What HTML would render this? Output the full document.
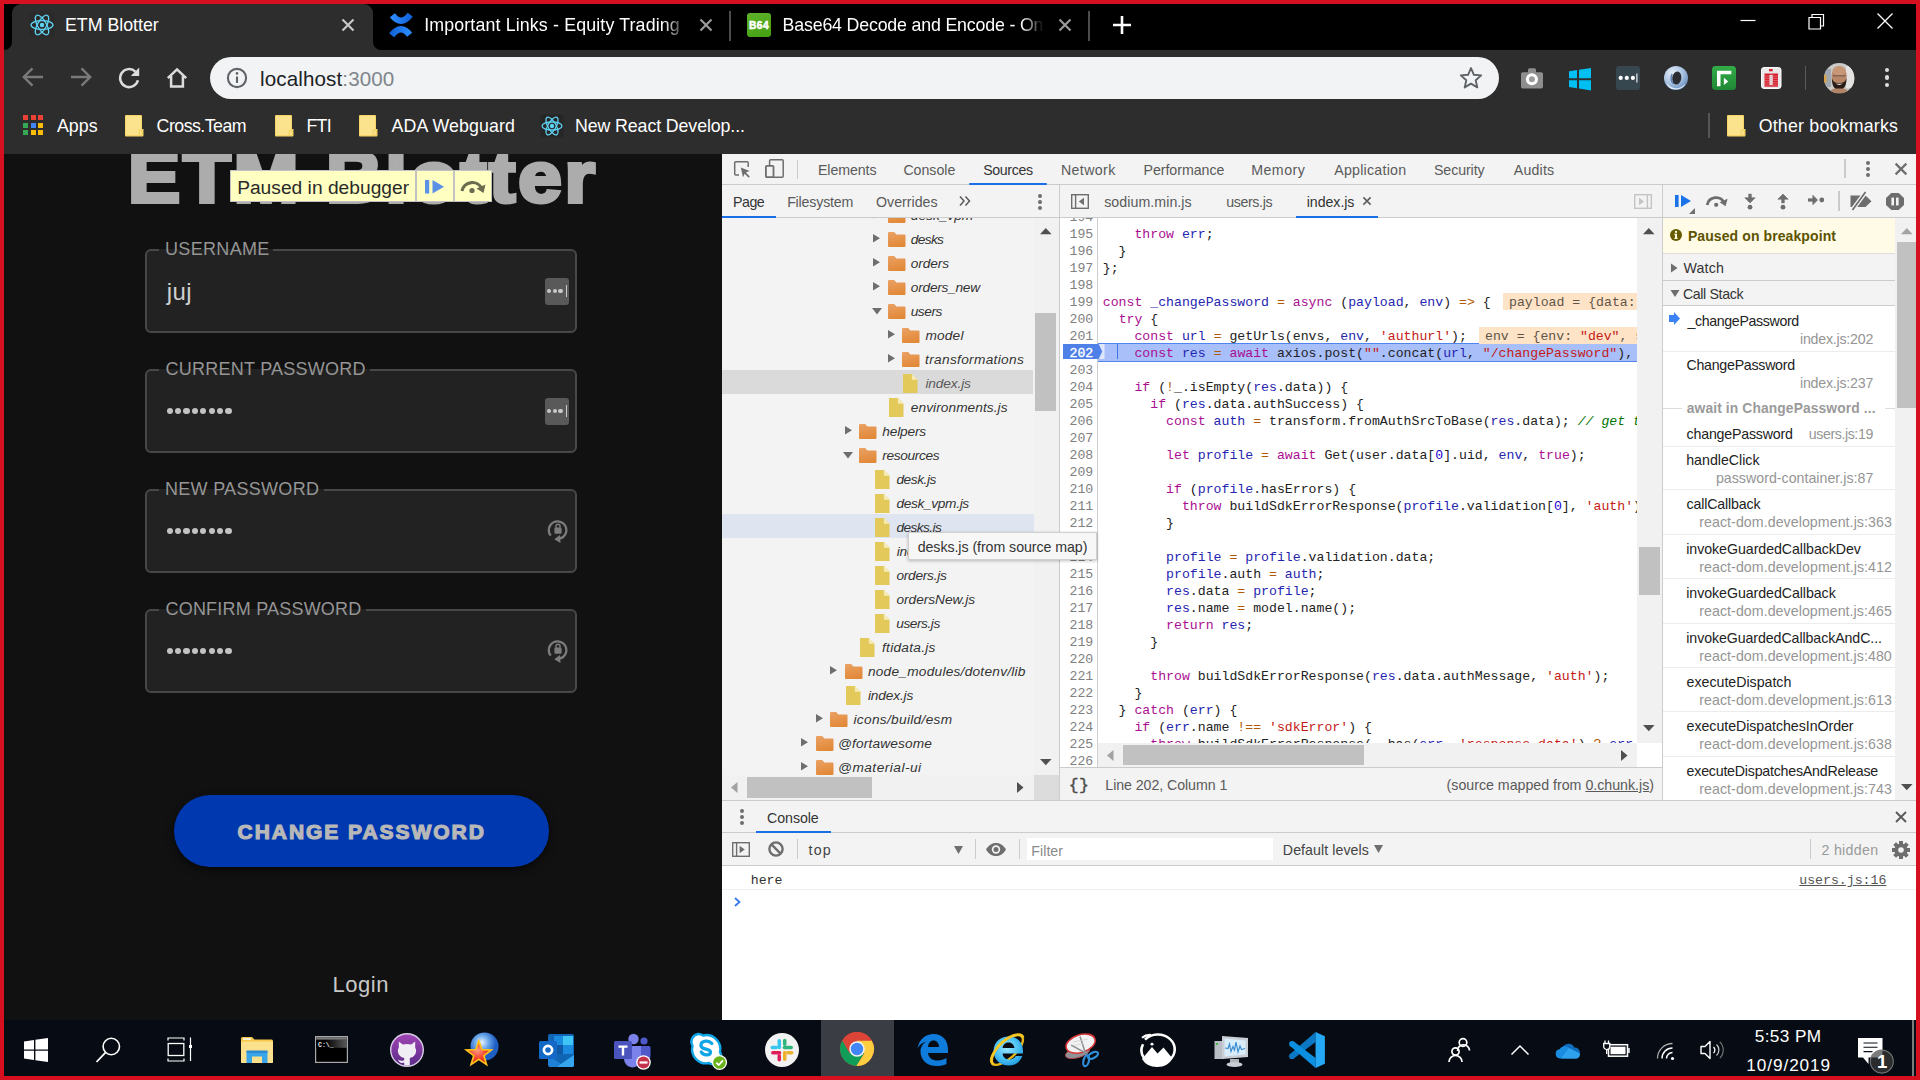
<!DOCTYPE html><html><head><meta charset="utf-8"><title>ETM Blotter</title><style>
*{box-sizing:border-box;margin:0;padding:0}
html,body{width:1920px;height:1080px;overflow:hidden;background:#000;font-family:"Liberation Sans",sans-serif;}
.a{position:absolute}
.t{position:absolute;white-space:pre;line-height:1}
svg{position:absolute;overflow:visible}
#frame{position:absolute;left:0;top:0;width:1920px;height:1080px;border:4px solid #d7101f;z-index:100;pointer-events:none}
.ct{color:#fff;font-size:18px}
.dt{font-size:14.2px;color:#333}
.mono{font-family:"Liberation Mono",monospace}
.tree{font-style:italic;font-size:14.2px;color:#333}
.code{font-family:"Liberation Mono",monospace;font-size:13.2px;color:#222}
.ln{font-family:"Liberation Mono",monospace;font-size:13.2px;color:#808080;text-align:right;width:34px}
.k{color:#aa0d91}.d{color:#2525b0}.s{color:#c41a16}.c{color:#007400;font-style:italic}.o{color:#b35900}.n{color:#1c00cf}
.cs{font-size:14.2px;color:#222}
.csl{font-size:14.2px;color:#999}
</style></head><body>
<div class="a" style="left:0px;top:0px;width:1920px;height:50px;background:#000;"></div>
<div class="a" style="left:0px;top:50px;width:1920px;height:104px;background:#2d2d2d;"></div>
<div class="a" style="left:12px;top:4px;width:361px;height:48px;background:#2d2d2d;border-radius:9px 9px 0 0"></div>
<div class="a" style="left:4px;top:42px;width:8px;height:8px;background:radial-gradient(circle at 0 0,#000 7.5px,#2d2d2d 8.5px)"></div>
<div class="a" style="left:373px;top:42px;width:8px;height:8px;background:radial-gradient(circle at 100% 0,#000 7.5px,#2d2d2d 8.5px)"></div>
<svg style="left:42px;top:25px" width="1" height="1"><g><rect x="-12.5" y="-12.5" width="25" height="25" rx="3" fill="#2a2a2a"/><ellipse rx="11" ry="4.4" fill="none" stroke="#5fd3f3" stroke-width="1.3" transform="rotate(0)"/><ellipse rx="11" ry="4.4" fill="none" stroke="#5fd3f3" stroke-width="1.3" transform="rotate(60)"/><ellipse rx="11" ry="4.4" fill="none" stroke="#5fd3f3" stroke-width="1.3" transform="rotate(120)"/><circle r="2.2" fill="#5fd3f3"/></g></svg>
<div class="t ct" style="left:65.04px;top:15px;line-height:20px;font-size:17.8px;letter-spacing:-0.022px;">ETM Blotter</div>
<svg style="left:348px;top:25px" width="1" height="1"><path d="M-5.5,-5.5L5.5,5.5M5.5,-5.5L-5.5,5.5" stroke="#c8c8c8" stroke-width="2.2" fill="none"/></svg>
<svg style="left:389px;top:13px" width="24" height="24" viewBox="0 0 24 24"><defs><linearGradient id="cf1" x1="0" x2="1"><stop offset="0" stop-color="#2a8bff"/><stop offset="1" stop-color="#1363d8"/></linearGradient><linearGradient id="cf2" x1="1" x2="0"><stop offset="0" stop-color="#2a8bff"/><stop offset="1" stop-color="#1363d8"/></linearGradient></defs><path d="M3.400,2.300Q12,13.500 21.300,1.800" stroke="url(#cf1)" stroke-width="6.400" fill="none"/><path d="M2.600,22.200Q12,10.500 20.600,21.700" stroke="url(#cf2)" stroke-width="6.400" fill="none"/></svg>
<div class="t ct" style="left:424.2px;top:15px;line-height:20px;font-size:17.8px;letter-spacing:0.144px;width:264px;overflow:hidden;-webkit-mask-image:linear-gradient(90deg,#000 240px,transparent 263px)">Important Links - Equity Trading - X</div>
<svg style="left:706px;top:25px" width="1" height="1"><path d="M-5.5,-5.5L5.5,5.5M5.5,-5.5L-5.5,5.5" stroke="#9a9a9a" stroke-width="2.2" fill="none"/></svg>
<div class="a" style="left:729px;top:11px;width:1.8px;height:30px;background:#4c4c4c;"></div>
<div class="a" style="left:747px;top:13px;width:24px;height:24px;background:#4ea81a;border-radius:3px;background:linear-gradient(160deg,#5fb32a,#44a012)"></div>
<div class="t " style="left:748.93px;top:20px;line-height:11px;font-size:10.2px;letter-spacing:0.509px;font-weight:bold;color:#fff;-webkit-text-stroke:0.5px #fff">B64</div>
<div class="t ct" style="left:782.6px;top:15px;line-height:20px;font-size:17.8px;letter-spacing:-0.18px;width:266px;overflow:hidden;-webkit-mask-image:linear-gradient(90deg,#000 238px,transparent 261px)">Base64 Decode and Encode - Online</div>
<svg style="left:1065px;top:25px" width="1" height="1"><path d="M-5.5,-5.5L5.5,5.5M5.5,-5.5L-5.5,5.5" stroke="#9a9a9a" stroke-width="2.2" fill="none"/></svg>
<div class="a" style="left:1088.2px;top:11px;width:1.8px;height:30px;background:#4c4c4c;"></div>
<svg style="left:1122px;top:25px" width="1" height="1"><path d="M-9,0H9M0,-9V9" stroke="#fff" stroke-width="2.6" fill="none"/></svg>
<svg style="left:1748px;top:20px" width="1" height="1"><path d="M-7.5,0.5H7.5" stroke="#fff" stroke-width="1.2" fill="none"/></svg>
<svg style="left:1816px;top:22px" width="1" height="1"><path d="M-7,-4.5H4.5V7H-7Z M-4,-4.5V-7.5H7.5V4H4.5" stroke="#fff" stroke-width="1.2" fill="none"/></svg>
<svg style="left:1885px;top:21px" width="1" height="1"><path d="M-7.5,-7.5L7.5,7.5M7.5,-7.5L-7.5,7.5" stroke="#fff" stroke-width="1.3" fill="none"/></svg>
<svg style="left:33px;top:77.2px" width="1" height="1"><path d="M10,0H-8M-0.5,-8.6L-9.2,0L-0.5,8.6" stroke="#7a7a7a" stroke-width="2.4" fill="none"/></svg>
<svg style="left:81px;top:77.2px" width="1" height="1"><path d="M-10,0H8M0.5,-8.6L9.2,0L0.5,8.6" stroke="#7a7a7a" stroke-width="2.4" fill="none"/></svg>
<svg style="left:129px;top:78px" width="1" height="1"><path d="M6.4,-6.4A9,9 0 1 0 8.9,2.2" stroke="#dcdcdc" stroke-width="2.5" fill="none"/><path d="M10.2,-10.4V-2H1.8Z" fill="#dcdcdc"/></svg>
<svg style="left:177px;top:78px" width="1" height="1"><path d="M-9.2,0.2L0,-8.600L9.2,0.2M-5.900,-2V8.600H5.900V-2" stroke="#dcdcdc" stroke-width="2.5" fill="none" stroke-linejoin="miter"/></svg>
<div class="a" style="left:210px;top:57px;width:1289px;height:42px;background:#f1f3f4;border-radius:21px"></div>
<svg style="left:237px;top:78px" width="1" height="1"><circle r="9.1" fill="none" stroke="#5f6368" stroke-width="2.1"/><path d="M0,-1.5V5" stroke="#5f6368" stroke-width="2.1"/><circle cy="-4.6" r="1.3" fill="#5f6368"/></svg>
<div class="t " style="left:260.12px;top:67px;line-height:23px;font-size:20.6px;letter-spacing:0.101px;"><span style="color:#202124">localhost</span><span style="color:#80868b">:3000</span></div>
<svg style="left:1471px;top:78px" width="1" height="1"><path d="M0,-10L2.9,-3.2L10.2,-2.6L4.7,2.2L6.3,9.4L0,5.6L-6.3,9.4L-4.7,2.2L-10.2,-2.6L-2.9,-3.2Z" stroke="#5f6368" stroke-width="1.9" fill="none" stroke-linejoin="round"/></svg>
<svg style="left:1520px;top:66px" width="24" height="24" viewBox="0 0 24 24"><path d="M8,6.300V3.800A1.600,1.600 0 0 1 9.600,2.200H14.400A1.600,1.600 0 0 1 16,3.800V6.300H21.200A1.800,1.800 0 0 1 23,8.100V20.700A1.800,1.800 0 0 1 21.200,22.500H2.800A1.800,1.800 0 0 1 1,20.700V8.100A1.800,1.800 0 0 1 2.800,6.300Z" fill="#8e8e8e"/><circle cx="11.900" cy="13.200" r="6" fill="#fdfdfd"/><circle cx="11.900" cy="13.200" r="3" fill="#9c9c9c"/></svg>
<svg style="left:1569px;top:67.500px" width="22" height="22.500" viewBox="0 0 22 22.500"><path d="M0,3.300L8,2.100V10.200H0ZM10,1.800L22,0V10.200H10ZM0,12.200H8V20.300L0,19.100ZM10,12.200H22V22.500L10,20.600Z" fill="#00bff3"/></svg>
<div class="a" style="left:1616px;top:66px;width:24px;height:24px;background:#37474f;border-radius:3px"></div>
<svg style="left:1616px;top:66px" width="24" height="24" viewBox="0 0 24 24"><circle cx="4.700" cy="11.900" r="2.100" fill="#fff"/><circle cx="10.800" cy="11.900" r="2.100" fill="#fff"/><circle cx="16.900" cy="11.900" r="2.100" fill="#fff"/><rect x="20.100" y="7.500" width="1.500" height="9" fill="#c8c8c8"/></svg>
<svg style="left:1664px;top:66px" width="24" height="24" viewBox="0 0 24 24"><defs><radialGradient id="ob" cx="0.35" cy="0.3" r="0.8"><stop offset="0" stop-color="#e6eef8"/><stop offset="0.55" stop-color="#a9c2e0"/><stop offset="1" stop-color="#5f86bb"/></radialGradient></defs><circle cx="12" cy="12" r="12" fill="url(#ob)"/><path d="M3,17A11,11 0 0 0 21,18A9,6 0 0 1 3,17Z" fill="#e9f1fa" opacity="0.900"/><ellipse cx="12.800" cy="12" rx="4.500" ry="6.600" fill="#2b2d33" transform="rotate(8 12.800 12)"/><path d="M8.200,8A5.500,7 0 0 0 9.500,18" stroke="#5b7fb4" stroke-width="1.500" fill="none"/></svg>
<svg style="left:1712px;top:66px" width="24" height="24" viewBox="0 0 24 24"><defs><linearGradient id="gg" x1="0" y1="0" x2="0" y2="1"><stop offset="0" stop-color="#33ad47"/><stop offset="1" stop-color="#1f8836"/></linearGradient></defs><rect width="24" height="24" rx="3.500" fill="url(#gg)"/><path d="M5,20.200V4.700H19.300V8.300H8.500V20.200Z" fill="#fff"/><path d="M11.900,11.800L16.300,15.400L11.900,19Z" fill="#fff"/></svg>
<svg style="left:1761px;top:67px" width="21" height="22" viewBox="0 0 21 22"><rect x="0.500" y="0.500" width="19.500" height="21" rx="2.500" fill="#e9e9e9" stroke="#fbfbfb" stroke-width="1"/><rect x="8" y="2" width="3.700" height="2.300" fill="#d8202f"/><rect x="3.500" y="6.500" width="13.500" height="13.200" fill="#d8202f"/><rect x="8.400" y="7.800" width="3.400" height="10.200" fill="#e4dede"/><path d="M3.500,9.200H17M3.500,11.400H17M3.500,13.600H17M3.500,15.800H17M3.500,18H17" stroke="#e9a0a6" stroke-width="0.500"/></svg>
<div class="a" style="left:1805px;top:66px;width:1.2px;height:24px;background:#5a5a5a;"></div>
<svg style="left:1823.700px;top:62.800px" width="30.400" height="30.400" viewBox="0 0 30.400 30.400"><defs><clipPath id="av"><circle cx="15.200" cy="15.200" r="15.200"/></clipPath></defs><g clip-path="url(#av)"><rect width="30.400" height="30.400" fill="#c9c9c7"/><rect x="0" y="6" width="7" height="18" fill="#9fa7b0"/><rect x="0" y="12" width="2.500" height="8" fill="#d9a441"/><rect x="22" y="3" width="9" height="22" fill="#e4e2e0"/><ellipse cx="15.200" cy="13" rx="7.600" ry="9.600" fill="#b98768"/><ellipse cx="15.200" cy="8" rx="6.600" ry="5" fill="#c79676"/><path d="M7.800,15C8,24 11,27 15.200,27C19.400,27 22.400,24 22.600,15C21,19.500 19,20 15.200,20C11.400,20 9.400,19.500 7.800,15Z" fill="#2a1d17"/><path d="M11.500,20.300Q15.200,23.500 18.900,20.300Q15.200,21.300 11.500,20.300Z" fill="#f1ece8"/><path d="M9,12.800H21.400" stroke="#5a463c" stroke-width="0.800"/><path d="M5,30.400Q7,25.500 12,25.500H18.400Q23.400,25.500 25.400,30.400Z" fill="#b28467"/></g></svg>
<div class="a" style="left:1884.5500000000002px;top:67.65px;width:4.700px;height:4.700px;border-radius:50%;background:#dedede"></div>
<div class="a" style="left:1884.5500000000002px;top:75.15px;width:4.700px;height:4.700px;border-radius:50%;background:#dedede"></div>
<div class="a" style="left:1884.5500000000002px;top:82.65px;width:4.700px;height:4.700px;border-radius:50%;background:#dedede"></div>
<div class="a" style="left:23.0px;top:115.0px;width:5.2px;height:5.2px;background:#ea4335;"></div>
<div class="a" style="left:30.6px;top:115.0px;width:5.2px;height:5.2px;background:#ea4335;"></div>
<div class="a" style="left:38.2px;top:115.0px;width:5.2px;height:5.2px;background:#ea4335;"></div>
<div class="a" style="left:23.0px;top:122.6px;width:5.2px;height:5.2px;background:#34a853;"></div>
<div class="a" style="left:30.6px;top:122.6px;width:5.2px;height:5.2px;background:#4285f4;"></div>
<div class="a" style="left:38.2px;top:122.6px;width:5.2px;height:5.2px;background:#fbbc05;"></div>
<div class="a" style="left:23.0px;top:130.2px;width:5.2px;height:5.2px;background:#34a853;"></div>
<div class="a" style="left:30.6px;top:130.2px;width:5.2px;height:5.2px;background:#fbbc05;"></div>
<div class="a" style="left:38.2px;top:130.2px;width:5.2px;height:5.2px;background:#fbbc05;"></div>
<div class="t ct" style="left:56.96px;top:116px;line-height:20px;font-size:17.8px;letter-spacing:0.037px;">Apps</div>
<svg style="left:125px;top:115px" width="19" height="22" viewBox="0 0 19 22"><path d="M1,0H16A1,1 0 0 1 17,1V14H18.5V20.5A1,1 0 0 1 17.5,21.5H1A1,1 0 0 1 0,20.5V1A1,1 0 0 1 1,0Z" fill="#f6d568"/><rect x="1" y="1" width="15" height="19" fill="#fbe38e"/><rect x="14.2" y="15" width="3.2" height="5.5" rx="1" fill="#fbe38e" stroke="#f1cc55" stroke-width="1"/></svg>
<div class="t ct" style="left:156.61px;top:116px;line-height:20px;font-size:17.8px;letter-spacing:-0.544px;">Cross.Team</div>
<svg style="left:275px;top:115px" width="19" height="22" viewBox="0 0 19 22"><path d="M1,0H16A1,1 0 0 1 17,1V14H18.5V20.5A1,1 0 0 1 17.5,21.5H1A1,1 0 0 1 0,20.5V1A1,1 0 0 1 1,0Z" fill="#f6d568"/><rect x="1" y="1" width="15" height="19" fill="#fbe38e"/><rect x="14.2" y="15" width="3.2" height="5.5" rx="1" fill="#fbe38e" stroke="#f1cc55" stroke-width="1"/></svg>
<div class="t ct" style="left:306.54px;top:116px;line-height:20px;font-size:17.8px;letter-spacing:-0.801px;">FTI</div>
<svg style="left:359px;top:115px" width="19" height="22" viewBox="0 0 19 22"><path d="M1,0H16A1,1 0 0 1 17,1V14H18.5V20.5A1,1 0 0 1 17.5,21.5H1A1,1 0 0 1 0,20.5V1A1,1 0 0 1 1,0Z" fill="#f6d568"/><rect x="1" y="1" width="15" height="19" fill="#fbe38e"/><rect x="14.2" y="15" width="3.2" height="5.5" rx="1" fill="#fbe38e" stroke="#f1cc55" stroke-width="1"/></svg>
<div class="t ct" style="left:391.46px;top:116px;line-height:20px;font-size:17.8px;letter-spacing:0.120px;">ADA Webguard</div>
<svg style="left:552px;top:126px" width="1" height="1"><g><rect x="-11.5" y="-11.5" width="23" height="23" rx="3" fill="#262626"/><ellipse rx="10" ry="4.0" fill="none" stroke="#5fd3f3" stroke-width="1.3" transform="rotate(0)"/><ellipse rx="10" ry="4.0" fill="none" stroke="#5fd3f3" stroke-width="1.3" transform="rotate(60)"/><ellipse rx="10" ry="4.0" fill="none" stroke="#5fd3f3" stroke-width="1.3" transform="rotate(120)"/><circle r="2.2" fill="#5fd3f3"/></g></svg>
<div class="t ct" style="left:575.04px;top:116px;line-height:20px;font-size:17.8px;letter-spacing:-0.109px;">New React Develop...</div>
<div class="a" style="left:1708px;top:113px;width:1.5px;height:25px;background:#555;"></div>
<svg style="left:1727px;top:115px" width="19" height="22" viewBox="0 0 19 22"><path d="M1,0H16A1,1 0 0 1 17,1V14H18.5V20.5A1,1 0 0 1 17.5,21.5H1A1,1 0 0 1 0,20.5V1A1,1 0 0 1 1,0Z" fill="#f6d568"/><rect x="1" y="1" width="15" height="19" fill="#fbe38e"/><rect x="14.2" y="15" width="3.2" height="5.5" rx="1" fill="#fbe38e" stroke="#f1cc55" stroke-width="1"/></svg>
<div class="t ct" style="left:1758.66px;top:116px;line-height:20px;font-size:17.8px;letter-spacing:0.212px;">Other bookmarks</div>
<div class="a" style="left:0px;top:154px;width:722px;height:866px;background:#111;"></div>
<div class="a" style="left:0;top:154px;width:722px;height:866px;overflow:hidden">
<div class="t" id="ttl" style="left:128.4px;top:-13.2px;font-size:72px;font-weight:bold;color:#acacac;letter-spacing:2.6px;-webkit-text-stroke:3.9px #acacac;transform-origin:0 0;transform:scaleX(1.086)">ETM Blotter</div>
</div>
<div class="a" style="left:230px;top:169.5px;width:262px;height:32.5px;background:#ffffc2;border:1.5px solid #c2c2c2"></div>
<div class="t " style="left:237.13px;top:177px;line-height:21px;font-size:19.2px;letter-spacing:0.012px;color:#2a2a2a">Paused in debugger</div>
<div class="a" style="left:415px;top:169.5px;width:1.5px;height:32.5px;background:#c2c2c2;"></div>
<div class="a" style="left:453px;top:169.5px;width:1.8px;height:32.5px;background:#c2c2c2;"></div>
<svg style="left:425px;top:179px" width="20" height="16" viewBox="0 0 20 16"><rect x="0" y="1" width="4.2" height="13.5" fill="#5b92e5"/><path d="M7.5,1L19,7.8L7.5,14.5Z" fill="#5b92e5"/></svg>
<svg style="left:459px;top:178px" width="28" height="18" viewBox="0 0 28 18"><path d="M3,13A10.5,10.5 0 0 1 23,11" stroke="#6b6b50" stroke-width="3.2" fill="none"/><path d="M26.5,6.5L24.5,15L17.5,10.5Z" fill="#6b6b50"/><circle cx="13" cy="12.5" r="2.6" fill="#6b6b50"/></svg>
<div class="a" style="left:145px;top:249px;width:432px;height:84px;border:2px solid #484848;border-radius:6px;background:#222"></div>
<div class="a" style="left:159px;top:249px;width:114px;height:3px;background:#222;"></div>
<div class="a" style="left:159px;top:246px;width:114px;height:3px;background:#111;"></div>
<div class="t " style="left:165.01px;top:239px;line-height:20px;font-size:18px;letter-spacing:0.331px;color:#959595">USERNAME</div>
<div class="t " style="left:166.80px;top:278px;line-height:27px;font-size:24px;letter-spacing:0.354px;color:#d0d0d0">juj</div>
<div class="a" style="left:545px;top:278px;width:24px;height:27px;background:#595959;border-radius:3px"></div>
<div class="a" style="left:547.0px;top:289px;width:4.4px;height:4.4px;border-radius:50%;background:#c9c9c9"></div>
<div class="a" style="left:552.6px;top:289px;width:4.4px;height:4.4px;border-radius:50%;background:#c9c9c9"></div>
<div class="a" style="left:558.2px;top:289px;width:4.4px;height:4.4px;border-radius:50%;background:#c9c9c9"></div>
<div class="a" style="left:565.6px;top:285px;width:1.2px;height:11.5px;background:#c9c9c9;"></div>
<div class="a" style="left:145px;top:369px;width:432px;height:84px;border:2px solid #484848;border-radius:6px;background:#222"></div>
<div class="a" style="left:159px;top:369px;width:211px;height:3px;background:#222;"></div>
<div class="a" style="left:159px;top:366px;width:211px;height:3px;background:#111;"></div>
<div class="t " style="left:165.50px;top:359px;line-height:20px;font-size:18px;letter-spacing:0.247px;color:#959595">CURRENT PASSWORD</div>
<div class="a" style="left:166.5px;top:407.5px;width:6.4px;height:6.4px;border-radius:50%;background:#c2c2c2"></div>
<div class="a" style="left:174.9px;top:407.5px;width:6.4px;height:6.4px;border-radius:50%;background:#c2c2c2"></div>
<div class="a" style="left:183.3px;top:407.5px;width:6.4px;height:6.4px;border-radius:50%;background:#c2c2c2"></div>
<div class="a" style="left:191.7px;top:407.5px;width:6.4px;height:6.4px;border-radius:50%;background:#c2c2c2"></div>
<div class="a" style="left:200.1px;top:407.5px;width:6.4px;height:6.4px;border-radius:50%;background:#c2c2c2"></div>
<div class="a" style="left:208.5px;top:407.5px;width:6.4px;height:6.4px;border-radius:50%;background:#c2c2c2"></div>
<div class="a" style="left:216.9px;top:407.5px;width:6.4px;height:6.4px;border-radius:50%;background:#c2c2c2"></div>
<div class="a" style="left:225.3px;top:407.5px;width:6.4px;height:6.4px;border-radius:50%;background:#c2c2c2"></div>
<div class="a" style="left:545px;top:398px;width:24px;height:27px;background:#595959;border-radius:3px"></div>
<div class="a" style="left:547.0px;top:409px;width:4.4px;height:4.4px;border-radius:50%;background:#c9c9c9"></div>
<div class="a" style="left:552.6px;top:409px;width:4.4px;height:4.4px;border-radius:50%;background:#c9c9c9"></div>
<div class="a" style="left:558.2px;top:409px;width:4.4px;height:4.4px;border-radius:50%;background:#c9c9c9"></div>
<div class="a" style="left:565.6px;top:405px;width:1.2px;height:11.5px;background:#c9c9c9;"></div>
<div class="a" style="left:145px;top:489px;width:432px;height:84px;border:2px solid #484848;border-radius:6px;background:#222"></div>
<div class="a" style="left:159px;top:489px;width:165px;height:3px;background:#222;"></div>
<div class="a" style="left:159px;top:486px;width:165px;height:3px;background:#111;"></div>
<div class="t " style="left:164.92px;top:479px;line-height:20px;font-size:18px;letter-spacing:0.306px;color:#959595">NEW PASSWORD</div>
<div class="a" style="left:166.5px;top:527.5px;width:6.4px;height:6.4px;border-radius:50%;background:#c2c2c2"></div>
<div class="a" style="left:174.9px;top:527.5px;width:6.4px;height:6.4px;border-radius:50%;background:#c2c2c2"></div>
<div class="a" style="left:183.3px;top:527.5px;width:6.4px;height:6.4px;border-radius:50%;background:#c2c2c2"></div>
<div class="a" style="left:191.7px;top:527.5px;width:6.4px;height:6.4px;border-radius:50%;background:#c2c2c2"></div>
<div class="a" style="left:200.1px;top:527.5px;width:6.4px;height:6.4px;border-radius:50%;background:#c2c2c2"></div>
<div class="a" style="left:208.5px;top:527.5px;width:6.4px;height:6.4px;border-radius:50%;background:#c2c2c2"></div>
<div class="a" style="left:216.9px;top:527.5px;width:6.4px;height:6.4px;border-radius:50%;background:#c2c2c2"></div>
<div class="a" style="left:225.3px;top:527.5px;width:6.4px;height:6.4px;border-radius:50%;background:#c2c2c2"></div>
<svg style="left:545.8px;top:517.5px" width="24" height="26" viewBox="0 0 24 26"><path d="M4.700,17.600A8.800,8.800 0 1 1 13,20.800" stroke="#7c7c7c" stroke-width="2.200" fill="none"/><path d="M14,17L8.200,21.300L14.500,25Z" fill="#7c7c7c"/><rect x="8.400" y="9.600" width="7.200" height="6.200" rx="0.800" fill="#7c7c7c"/><path d="M10,9.800V8.200A2,2 0 0 1 14,8.200V9.800" stroke="#7c7c7c" stroke-width="1.500" fill="none"/></svg>
<div class="a" style="left:145px;top:609px;width:432px;height:84px;border:2px solid #484848;border-radius:6px;background:#222"></div>
<div class="a" style="left:159px;top:609px;width:207px;height:3px;background:#222;"></div>
<div class="a" style="left:159px;top:606px;width:207px;height:3px;background:#111;"></div>
<div class="t " style="left:165.50px;top:599px;line-height:20px;font-size:18px;letter-spacing:0.206px;color:#959595">CONFIRM PASSWORD</div>
<div class="a" style="left:166.5px;top:647.5px;width:6.4px;height:6.4px;border-radius:50%;background:#c2c2c2"></div>
<div class="a" style="left:174.9px;top:647.5px;width:6.4px;height:6.4px;border-radius:50%;background:#c2c2c2"></div>
<div class="a" style="left:183.3px;top:647.5px;width:6.4px;height:6.4px;border-radius:50%;background:#c2c2c2"></div>
<div class="a" style="left:191.7px;top:647.5px;width:6.4px;height:6.4px;border-radius:50%;background:#c2c2c2"></div>
<div class="a" style="left:200.1px;top:647.5px;width:6.4px;height:6.4px;border-radius:50%;background:#c2c2c2"></div>
<div class="a" style="left:208.5px;top:647.5px;width:6.4px;height:6.4px;border-radius:50%;background:#c2c2c2"></div>
<div class="a" style="left:216.9px;top:647.5px;width:6.4px;height:6.4px;border-radius:50%;background:#c2c2c2"></div>
<div class="a" style="left:225.3px;top:647.5px;width:6.4px;height:6.4px;border-radius:50%;background:#c2c2c2"></div>
<svg style="left:545.8px;top:637.5px" width="24" height="26" viewBox="0 0 24 26"><path d="M4.700,17.600A8.800,8.800 0 1 1 13,20.800" stroke="#7c7c7c" stroke-width="2.200" fill="none"/><path d="M14,17L8.200,21.300L14.500,25Z" fill="#7c7c7c"/><rect x="8.400" y="9.600" width="7.200" height="6.200" rx="0.800" fill="#7c7c7c"/><path d="M10,9.800V8.200A2,2 0 0 1 14,8.200V9.800" stroke="#7c7c7c" stroke-width="1.500" fill="none"/></svg>
<div class="a" style="left:174px;top:795px;width:375px;height:72px;border-radius:36px;background:#0038b0;box-shadow:0 3px 8px rgba(0,0,0,.6)"></div>
<div class="t " style="left:237.54px;top:820px;line-height:23px;font-size:21px;letter-spacing:1.955px;font-weight:bold;color:#b8b8b8;-webkit-text-stroke:1.2px #b8b8b8">CHANGE PASSWORD</div>
<div class="t " style="left:332.40px;top:972px;line-height:25px;font-size:22px;letter-spacing:0.569px;color:#c8c8c8">Login</div>
<div class="a" style="left:722px;top:154px;width:1194px;height:866px;background:#fff;"></div>
<div class="a" style="left:722px;top:154px;width:1194px;height:30px;background:#f3f3f3;"></div>
<div class="a" style="left:722px;top:184px;width:1194px;height:1px;background:#cbcbcb;"></div>
<svg style="left:734px;top:161px" width="17" height="17" viewBox="0 0 17 17"><path d="M14.2,6V1.7A1,1 0 0 0 13.2,0.7H1.7A1,1 0 0 0 0.7,1.7V13A1,1 0 0 0 1.7,14H5" stroke="#6e6e6e" stroke-width="1.5" fill="none"/><path d="M6.8,6.5L15.6,9.9L11.9,11.6L15.8,15.5L14.6,16.7L10.7,12.8L9,16.3Z" fill="#6e6e6e"/></svg>
<svg style="left:765px;top:159px" width="19" height="19" viewBox="0 0 19 19"><rect x="4.6" y="0.8" width="13.6" height="17.4" rx="1" stroke="#6e6e6e" stroke-width="1.5" fill="none"/><rect x="0.9" y="6.8" width="7.6" height="11.4" rx="1" stroke="#6e6e6e" stroke-width="1.8" fill="#f3f3f3"/></svg>
<div class="a" style="left:796.6px;top:160px;width:1.6px;height:19px;background:#cacaca;"></div>
<div class="t " style="left:817.94px;top:162px;line-height:16px;font-size:14.2px;letter-spacing:-0.073px;color:#5a5a5a">Elements</div>
<div class="t " style="left:903.39px;top:162px;line-height:16px;font-size:14.2px;letter-spacing:-0.011px;color:#5a5a5a">Console</div>
<div class="t " style="left:1060.94px;top:162px;line-height:16px;font-size:14.2px;letter-spacing:0.375px;color:#5a5a5a">Network</div>
<div class="t " style="left:1143.44px;top:162px;line-height:16px;font-size:14.2px;letter-spacing:-0.021px;color:#5a5a5a">Performance</div>
<div class="t " style="left:1251.14px;top:162px;line-height:16px;font-size:14.2px;letter-spacing:0.503px;color:#5a5a5a">Memory</div>
<div class="t " style="left:1334.17px;top:162px;line-height:16px;font-size:14.2px;letter-spacing:0.257px;color:#5a5a5a">Application</div>
<div class="t " style="left:1433.96px;top:162px;line-height:16px;font-size:14.2px;letter-spacing:-0.089px;color:#5a5a5a">Security</div>
<div class="t " style="left:1513.87px;top:162px;line-height:16px;font-size:14.2px;letter-spacing:0.156px;color:#5a5a5a">Audits</div>
<div class="t " style="left:983.16px;top:162px;line-height:16px;font-size:14.2px;letter-spacing:-0.356px;color:#333">Sources</div>
<div class="a" style="left:969.2px;top:182.6px;width:78.2px;height:2.5px;background:#1a6fe6;border-radius:1px"></div>
<div class="a" style="left:1844.2px;top:159px;width:1.8px;height:19px;background:#cacaca;"></div>
<div class="a" style="left:1865.6px;top:161.01999999999998px;width:4px;height:4px;border-radius:50%;background:#6e6e6e"></div>
<div class="a" style="left:1865.6px;top:167.2px;width:4px;height:4px;border-radius:50%;background:#6e6e6e"></div>
<div class="a" style="left:1865.6px;top:173.38px;width:4px;height:4px;border-radius:50%;background:#6e6e6e"></div>
<svg style="left:1901.1px;top:168.5px" width="1" height="1"><path d="M-5.4,-5.4L5.4,5.4M5.4,-5.4L-5.4,5.4" stroke="#6e6e6e" stroke-width="2.2" fill="none"/></svg>
<div class="a" style="left:722px;top:185px;width:1194px;height:32px;background:#f3f3f3;"></div>
<div class="a" style="left:722px;top:217px;width:1194px;height:1px;background:#cbcbcb;"></div>
<div class="t " style="left:733.04px;top:194px;line-height:16px;font-size:14.2px;letter-spacing:-0.489px;color:#333">Page</div>
<div class="t " style="left:787.14px;top:194px;line-height:16px;font-size:14.2px;letter-spacing:-0.173px;color:#5a5a5a">Filesystem</div>
<div class="t " style="left:876.03px;top:194px;line-height:16px;font-size:14.2px;letter-spacing:0.003px;color:#5a5a5a">Overrides</div>
<svg style="left:959px;top:196px" width="12" height="10" viewBox="0 0 12 10"><path d="M1,0.5L5,5L1,9.5M6.5,0.5L10.5,5L6.5,9.5" stroke="#5a5a5a" stroke-width="1.5" fill="none"/></svg>
<div class="a" style="left:1037.6px;top:193.5px;width:4px;height:4px;border-radius:50%;background:#6e6e6e"></div>
<div class="a" style="left:1037.6px;top:199.5px;width:4px;height:4px;border-radius:50%;background:#6e6e6e"></div>
<div class="a" style="left:1037.6px;top:205.5px;width:4px;height:4px;border-radius:50%;background:#6e6e6e"></div>
<div class="a" style="left:722px;top:215.5px;width:54px;height:2.5px;background:#1a6fe6;"></div>
<div class="a" style="left:1059px;top:185px;width:1px;height:615px;background:#cbcbcb;"></div>
<div class="a" style="left:1662px;top:185px;width:1px;height:615px;background:#cbcbcb;"></div>
<svg style="left:1071px;top:194px" width="18" height="15" viewBox="0 0 18 15"><rect x="0.7" y="0.7" width="16.6" height="13.6" stroke="#6e6e6e" stroke-width="1.4" fill="none"/><path d="M4.6,0.7V14.3" stroke="#6e6e6e" stroke-width="1.4"/><path d="M13,3.8V11.2L7.8,7.5Z" fill="#6e6e6e"/></svg>
<div class="t " style="left:1104.22px;top:194px;line-height:16px;font-size:14.2px;letter-spacing:0.057px;color:#5a5a5a">sodium.min.js</div>
<div class="t " style="left:1226.19px;top:194px;line-height:16px;font-size:14.2px;letter-spacing:-0.357px;color:#5a5a5a">users.js</div>
<div class="t " style="left:1306.76px;top:194px;line-height:16px;font-size:14.2px;letter-spacing:-0.058px;color:#333">index.js</div>
<svg style="left:1366.5px;top:201px" width="1" height="1"><path d="M-3.6,-3.6L3.6,3.6M3.6,-3.6L-3.6,3.6" stroke="#5a5a5a" stroke-width="1.5" fill="none"/></svg>
<div class="a" style="left:1296px;top:215.5px;width:82px;height:2.5px;background:#1a6fe6;"></div>
<svg style="left:1634px;top:194px" width="18" height="15" viewBox="0 0 18 15"><rect x="0.7" y="0.7" width="16.6" height="13.6" stroke="#c4c4c4" stroke-width="1.4" fill="none"/><path d="M13.4,0.7V14.3" stroke="#c4c4c4" stroke-width="1.4"/><path d="M5,3.8V11.2L10.2,7.5Z" fill="#c4c4c4"/></svg>
<div class="a" style="left:722px;top:218px;width:337px;height:583px;background:#f3f3f3;"></div>
<div class="a" style="left:722px;top:218px;width:312px;height:557px;overflow:hidden">
<svg style="left:151.29999999999995px;top:-8.199999999999989px" width="7" height="8.6" viewBox="0 0 7 8.6"><path d="M0,0V8.6L7,4.3Z" fill="#6e6e6e"/></svg>
<svg style="left:166.0px;top:-10.5px" width="18" height="15" viewBox="0 0 18 15"><defs><linearGradient id="fg" x1="0" y1="0" x2="0.3" y2="1"><stop offset="0" stop-color="#eaa264"/><stop offset="1" stop-color="#e28a3a"/></linearGradient></defs><path d="M1,0H6.2L8.3,2.4H16.5A1,1 0 0 1 17.5,3.4V14A1,1 0 0 1 16.5,15H1A1,1 0 0 1 0,14V1A1,1 0 0 1 1,0Z" fill="url(#fg)"/></svg>
<div class="t " style="left:188.85px;top:-10px;line-height:15px;font-size:13.7px;font-style:italic;color:#333">desk_vpm</div>
<svg style="left:151.29999999999995px;top:15.800000000000011px" width="7" height="8.6" viewBox="0 0 7 8.6"><path d="M0,0V8.6L7,4.3Z" fill="#6e6e6e"/></svg>
<svg style="left:166.0px;top:13.5px" width="18" height="15" viewBox="0 0 18 15"><defs><linearGradient id="fg" x1="0" y1="0" x2="0.3" y2="1"><stop offset="0" stop-color="#eaa264"/><stop offset="1" stop-color="#e28a3a"/></linearGradient></defs><path d="M1,0H6.2L8.3,2.4H16.5A1,1 0 0 1 17.5,3.4V14A1,1 0 0 1 16.5,15H1A1,1 0 0 1 0,14V1A1,1 0 0 1 1,0Z" fill="url(#fg)"/></svg>
<div class="t " style="left:188.85px;top:14px;line-height:15px;font-size:13.7px;letter-spacing:-0.665px;font-style:italic;color:#333">desks</div>
<svg style="left:151.29999999999995px;top:39.80000000000001px" width="7" height="8.6" viewBox="0 0 7 8.6"><path d="M0,0V8.6L7,4.3Z" fill="#6e6e6e"/></svg>
<svg style="left:166.0px;top:37.5px" width="18" height="15" viewBox="0 0 18 15"><defs><linearGradient id="fg" x1="0" y1="0" x2="0.3" y2="1"><stop offset="0" stop-color="#eaa264"/><stop offset="1" stop-color="#e28a3a"/></linearGradient></defs><path d="M1,0H6.2L8.3,2.4H16.5A1,1 0 0 1 17.5,3.4V14A1,1 0 0 1 16.5,15H1A1,1 0 0 1 0,14V1A1,1 0 0 1 1,0Z" fill="url(#fg)"/></svg>
<div class="t " style="left:188.86px;top:38px;line-height:15px;font-size:13.7px;letter-spacing:-0.125px;font-style:italic;color:#333">orders</div>
<svg style="left:151.29999999999995px;top:63.80000000000001px" width="7" height="8.6" viewBox="0 0 7 8.6"><path d="M0,0V8.6L7,4.3Z" fill="#6e6e6e"/></svg>
<svg style="left:166.0px;top:61.5px" width="18" height="15" viewBox="0 0 18 15"><defs><linearGradient id="fg" x1="0" y1="0" x2="0.3" y2="1"><stop offset="0" stop-color="#eaa264"/><stop offset="1" stop-color="#e28a3a"/></linearGradient></defs><path d="M1,0H6.2L8.3,2.4H16.5A1,1 0 0 1 17.5,3.4V14A1,1 0 0 1 16.5,15H1A1,1 0 0 1 0,14V1A1,1 0 0 1 1,0Z" fill="url(#fg)"/></svg>
<div class="t " style="left:188.86px;top:62px;line-height:15px;font-size:13.7px;letter-spacing:-0.254px;font-style:italic;color:#333">orders_new</div>
<svg style="left:149.5px;top:89.80000000000001px" width="10" height="6.5" viewBox="0 0 10 6.5"><path d="M0,0H10L5,6.5Z" fill="#6e6e6e"/></svg>
<svg style="left:166.0px;top:85.5px" width="18" height="15" viewBox="0 0 18 15"><defs><linearGradient id="fg" x1="0" y1="0" x2="0.3" y2="1"><stop offset="0" stop-color="#eaa264"/><stop offset="1" stop-color="#e28a3a"/></linearGradient></defs><path d="M1,0H6.2L8.3,2.4H16.5A1,1 0 0 1 17.5,3.4V14A1,1 0 0 1 16.5,15H1A1,1 0 0 1 0,14V1A1,1 0 0 1 1,0Z" fill="url(#fg)"/></svg>
<div class="t " style="left:188.72px;top:86px;line-height:15px;font-size:13.7px;letter-spacing:-0.462px;font-style:italic;color:#333">users</div>
<svg style="left:165.69999999999993px;top:111.80000000000001px" width="7" height="8.6" viewBox="0 0 7 8.6"><path d="M0,0V8.6L7,4.3Z" fill="#6e6e6e"/></svg>
<svg style="left:180.39999999999998px;top:109.5px" width="18" height="15" viewBox="0 0 18 15"><defs><linearGradient id="fg" x1="0" y1="0" x2="0.3" y2="1"><stop offset="0" stop-color="#eaa264"/><stop offset="1" stop-color="#e28a3a"/></linearGradient></defs><path d="M1,0H6.2L8.3,2.4H16.5A1,1 0 0 1 17.5,3.4V14A1,1 0 0 1 16.5,15H1A1,1 0 0 1 0,14V1A1,1 0 0 1 1,0Z" fill="url(#fg)"/></svg>
<div class="t " style="left:203.48px;top:110px;line-height:15px;font-size:13.7px;letter-spacing:0.175px;font-style:italic;color:#333">model</div>
<svg style="left:165.69999999999993px;top:135.8px" width="7" height="8.6" viewBox="0 0 7 8.6"><path d="M0,0V8.6L7,4.3Z" fill="#6e6e6e"/></svg>
<svg style="left:180.39999999999998px;top:133.5px" width="18" height="15" viewBox="0 0 18 15"><defs><linearGradient id="fg" x1="0" y1="0" x2="0.3" y2="1"><stop offset="0" stop-color="#eaa264"/><stop offset="1" stop-color="#e28a3a"/></linearGradient></defs><path d="M1,0H6.2L8.3,2.4H16.5A1,1 0 0 1 17.5,3.4V14A1,1 0 0 1 16.5,15H1A1,1 0 0 1 0,14V1A1,1 0 0 1 1,0Z" fill="url(#fg)"/></svg>
<div class="t " style="left:203.08px;top:134px;line-height:15px;font-size:13.7px;letter-spacing:0.312px;font-style:italic;color:#333">transformations</div>
<div class="a" style="left:0;top:152.2px;width:311px;height:24px;background:#dadada"></div>
<svg style="left:181.39999999999998px;top:155.5px" width="15" height="19" viewBox="0 0 15 19"><path d="M0,0H8.8L14.5,5.8V19H0Z" fill="#e3c85a"/><path d="M8.8,0V5.8H14.5Z" fill="#f6ebb5"/></svg>
<div class="t " style="left:203.48px;top:158px;line-height:15px;font-size:13.7px;letter-spacing:-0.138px;font-style:italic;color:#5a5a5a">index.js</div>
<svg style="left:167.0px;top:179.5px" width="15" height="19" viewBox="0 0 15 19"><path d="M0,0H8.8L14.5,5.8V19H0Z" fill="#e3c85a"/><path d="M8.8,0V5.8H14.5Z" fill="#f6ebb5"/></svg>
<div class="t " style="left:188.85px;top:182px;line-height:15px;font-size:13.7px;letter-spacing:0.056px;font-style:italic;color:#333">environments.js</div>
<svg style="left:122.5px;top:207.8px" width="7" height="8.6" viewBox="0 0 7 8.6"><path d="M0,0V8.6L7,4.3Z" fill="#6e6e6e"/></svg>
<svg style="left:137.20000000000005px;top:205.5px" width="18" height="15" viewBox="0 0 18 15"><defs><linearGradient id="fg" x1="0" y1="0" x2="0.3" y2="1"><stop offset="0" stop-color="#eaa264"/><stop offset="1" stop-color="#e28a3a"/></linearGradient></defs><path d="M1,0H6.2L8.3,2.4H16.5A1,1 0 0 1 17.5,3.4V14A1,1 0 0 1 16.5,15H1A1,1 0 0 1 0,14V1A1,1 0 0 1 1,0Z" fill="url(#fg)"/></svg>
<div class="t " style="left:160.28px;top:206px;line-height:15px;font-size:13.7px;letter-spacing:-0.174px;font-style:italic;color:#333">helpers</div>
<svg style="left:120.70000000000005px;top:233.8px" width="10" height="6.5" viewBox="0 0 10 6.5"><path d="M0,0H10L5,6.5Z" fill="#6e6e6e"/></svg>
<svg style="left:137.20000000000005px;top:229.5px" width="18" height="15" viewBox="0 0 18 15"><defs><linearGradient id="fg" x1="0" y1="0" x2="0.3" y2="1"><stop offset="0" stop-color="#eaa264"/><stop offset="1" stop-color="#e28a3a"/></linearGradient></defs><path d="M1,0H6.2L8.3,2.4H16.5A1,1 0 0 1 17.5,3.4V14A1,1 0 0 1 16.5,15H1A1,1 0 0 1 0,14V1A1,1 0 0 1 1,0Z" fill="url(#fg)"/></svg>
<div class="t " style="left:160.28px;top:230px;line-height:15px;font-size:13.7px;letter-spacing:-0.333px;font-style:italic;color:#333">resources</div>
<svg style="left:152.60000000000002px;top:251.5px" width="15" height="19" viewBox="0 0 15 19"><path d="M0,0H8.8L14.5,5.8V19H0Z" fill="#e3c85a"/><path d="M8.8,0V5.8H14.5Z" fill="#f6ebb5"/></svg>
<div class="t " style="left:174.45px;top:254px;line-height:15px;font-size:13.7px;letter-spacing:-0.435px;font-style:italic;color:#333">desk.js</div>
<svg style="left:152.60000000000002px;top:275.5px" width="15" height="19" viewBox="0 0 15 19"><path d="M0,0H8.8L14.5,5.8V19H0Z" fill="#e3c85a"/><path d="M8.8,0V5.8H14.5Z" fill="#f6ebb5"/></svg>
<div class="t " style="left:174.45px;top:278px;line-height:15px;font-size:13.7px;letter-spacing:-0.332px;font-style:italic;color:#333">desk_vpm.js</div>
<div class="a" style="left:0;top:296.20000000000005px;width:312px;height:24px;background:#dfe5f0"></div>
<svg style="left:152.60000000000002px;top:299.5px" width="15" height="19" viewBox="0 0 15 19"><path d="M0,0H8.8L14.5,5.8V19H0Z" fill="#e3c85a"/><path d="M8.8,0V5.8H14.5Z" fill="#f6ebb5"/></svg>
<div class="t " style="left:174.45px;top:302px;line-height:15px;font-size:13.7px;letter-spacing:-0.580px;font-style:italic;color:#333">desks.js</div>
<svg style="left:152.60000000000002px;top:323.5px" width="15" height="19" viewBox="0 0 15 19"><path d="M0,0H8.8L14.5,5.8V19H0Z" fill="#e3c85a"/><path d="M8.8,0V5.8H14.5Z" fill="#f6ebb5"/></svg>
<div class="t " style="left:174.68px;top:326px;line-height:15px;font-size:13.7px;letter-spacing:-0.138px;font-style:italic;color:#333">index.js</div>
<svg style="left:152.60000000000002px;top:347.5px" width="15" height="19" viewBox="0 0 15 19"><path d="M0,0H8.8L14.5,5.8V19H0Z" fill="#e3c85a"/><path d="M8.8,0V5.8H14.5Z" fill="#f6ebb5"/></svg>
<div class="t " style="left:174.46px;top:350px;line-height:15px;font-size:13.7px;letter-spacing:-0.266px;font-style:italic;color:#333">orders.js</div>
<svg style="left:152.60000000000002px;top:371.5px" width="15" height="19" viewBox="0 0 15 19"><path d="M0,0H8.8L14.5,5.8V19H0Z" fill="#e3c85a"/><path d="M8.8,0V5.8H14.5Z" fill="#f6ebb5"/></svg>
<div class="t " style="left:174.46px;top:374px;line-height:15px;font-size:13.7px;letter-spacing:-0.034px;font-style:italic;color:#333">ordersNew.js</div>
<svg style="left:152.60000000000002px;top:395.5px" width="15" height="19" viewBox="0 0 15 19"><path d="M0,0H8.8L14.5,5.8V19H0Z" fill="#e3c85a"/><path d="M8.8,0V5.8H14.5Z" fill="#f6ebb5"/></svg>
<div class="t " style="left:174.32px;top:398px;line-height:15px;font-size:13.7px;letter-spacing:-0.464px;font-style:italic;color:#333">users.js</div>
<svg style="left:138.20000000000005px;top:419.5px" width="15" height="19" viewBox="0 0 15 19"><path d="M0,0H8.8L14.5,5.8V19H0Z" fill="#e3c85a"/><path d="M8.8,0V5.8H14.5Z" fill="#f6ebb5"/></svg>
<div class="t " style="left:160.05px;top:422px;line-height:15px;font-size:13.7px;letter-spacing:0.256px;font-style:italic;color:#333">ftidata.js</div>
<svg style="left:108.09999999999991px;top:447.79999999999995px" width="7" height="8.6" viewBox="0 0 7 8.6"><path d="M0,0V8.6L7,4.3Z" fill="#6e6e6e"/></svg>
<svg style="left:122.79999999999995px;top:445.5px" width="18" height="15" viewBox="0 0 18 15"><defs><linearGradient id="fg" x1="0" y1="0" x2="0.3" y2="1"><stop offset="0" stop-color="#eaa264"/><stop offset="1" stop-color="#e28a3a"/></linearGradient></defs><path d="M1,0H6.2L8.3,2.4H16.5A1,1 0 0 1 17.5,3.4V14A1,1 0 0 1 16.5,15H1A1,1 0 0 1 0,14V1A1,1 0 0 1 1,0Z" fill="url(#fg)"/></svg>
<div class="t " style="left:145.88px;top:446px;line-height:15px;font-size:13.7px;letter-spacing:0.245px;font-style:italic;color:#333">node_modules/dotenv/lib</div>
<svg style="left:123.79999999999995px;top:467.5px" width="15" height="19" viewBox="0 0 15 19"><path d="M0,0H8.8L14.5,5.8V19H0Z" fill="#e3c85a"/><path d="M8.8,0V5.8H14.5Z" fill="#f6ebb5"/></svg>
<div class="t " style="left:145.88px;top:470px;line-height:15px;font-size:13.7px;letter-spacing:-0.138px;font-style:italic;color:#333">index.js</div>
<svg style="left:93.69999999999993px;top:495.79999999999995px" width="7" height="8.6" viewBox="0 0 7 8.6"><path d="M0,0V8.6L7,4.3Z" fill="#6e6e6e"/></svg>
<svg style="left:108.39999999999998px;top:493.5px" width="18" height="15" viewBox="0 0 18 15"><defs><linearGradient id="fg" x1="0" y1="0" x2="0.3" y2="1"><stop offset="0" stop-color="#eaa264"/><stop offset="1" stop-color="#e28a3a"/></linearGradient></defs><path d="M1,0H6.2L8.3,2.4H16.5A1,1 0 0 1 17.5,3.4V14A1,1 0 0 1 16.5,15H1A1,1 0 0 1 0,14V1A1,1 0 0 1 1,0Z" fill="url(#fg)"/></svg>
<div class="t " style="left:131.48px;top:494px;line-height:15px;font-size:13.7px;letter-spacing:0.309px;font-style:italic;color:#333">icons/build/esm</div>
<svg style="left:79.29999999999995px;top:519.8px" width="7" height="8.6" viewBox="0 0 7 8.6"><path d="M0,0V8.6L7,4.3Z" fill="#6e6e6e"/></svg>
<svg style="left:94.0px;top:517.5px" width="18" height="15" viewBox="0 0 18 15"><defs><linearGradient id="fg" x1="0" y1="0" x2="0.3" y2="1"><stop offset="0" stop-color="#eaa264"/><stop offset="1" stop-color="#e28a3a"/></linearGradient></defs><path d="M1,0H6.2L8.3,2.4H16.5A1,1 0 0 1 17.5,3.4V14A1,1 0 0 1 16.5,15H1A1,1 0 0 1 0,14V1A1,1 0 0 1 1,0Z" fill="url(#fg)"/></svg>
<div class="t " style="left:116.01px;top:518px;line-height:15px;font-size:13.7px;letter-spacing:0.149px;font-style:italic;color:#333">@fortawesome</div>
<svg style="left:79.29999999999995px;top:543.8px" width="7" height="8.6" viewBox="0 0 7 8.6"><path d="M0,0V8.6L7,4.3Z" fill="#6e6e6e"/></svg>
<svg style="left:94.0px;top:541.5px" width="18" height="15" viewBox="0 0 18 15"><defs><linearGradient id="fg" x1="0" y1="0" x2="0.3" y2="1"><stop offset="0" stop-color="#eaa264"/><stop offset="1" stop-color="#e28a3a"/></linearGradient></defs><path d="M1,0H6.2L8.3,2.4H16.5A1,1 0 0 1 17.5,3.4V14A1,1 0 0 1 16.5,15H1A1,1 0 0 1 0,14V1A1,1 0 0 1 1,0Z" fill="url(#fg)"/></svg>
<div class="t " style="left:116.01px;top:542px;line-height:15px;font-size:13.7px;letter-spacing:0.483px;font-style:italic;color:#333">@material-ui</div>
</div>
<div class="a" style="left:1034px;top:218px;width:25px;height:557px;background:#f1f1f1;"></div>
<svg style="left:1040px;top:228px" width="11.6" height="6.2" viewBox="0 0 11.6 6.2"><path d="M0,6.2H11.6L5.8,0Z" fill="#505050"/></svg>
<svg style="left:1040px;top:759px" width="11.6" height="6.2" viewBox="0 0 11.6 6.2"><path d="M0,0H11.6L5.8,6.2Z" fill="#505050"/></svg>
<div class="a" style="left:1035px;top:313px;width:21px;height:98px;background:#c1c1c1;"></div>
<div class="a" style="left:722px;top:775px;width:312px;height:25px;background:#f1f1f1;"></div>
<div class="a" style="left:1034px;top:775px;width:25px;height:25px;background:#dcdcdc;"></div>
<svg style="left:731px;top:782px" width="6.5" height="11" viewBox="0 0 6.5 11"><path d="M6.5,0V11L0,5.5Z" fill="#a3a3a3"/></svg>
<svg style="left:1017px;top:782px" width="6.5" height="11" viewBox="0 0 6.5 11"><path d="M0,0V11L6.5,5.5Z" fill="#505050"/></svg>
<div class="a" style="left:747px;top:777px;width:125px;height:21px;background:#c1c1c1;"></div>
<div class="a" style="left:1060px;top:218px;width:577px;height:549px;overflow:hidden;background:#fff">
<div class="a" style="left:37px;top:0px;width:1px;height:552px;background:#cfcfcf;"></div>
<div class="a" style="left:38px;top:125.19999999999999px;width:560px;height:18.4px;background:#a8bffa;border-top:1.2px solid #4f85f0;border-bottom:1.6px solid #4f85f0"></div>
<svg style="left:3px;top:126.19999999999999px" width="40" height="15" viewBox="0 0 40 15"><path d="M0,0H35.5L39,7.5L35.5,15H0Z" fill="#4e80e8"/><path d="M36,0H41.5V15H36L39.6,7.5Z" fill="#dfe7fc"/></svg>
<div class="a" style="left:57px;top:126.39999999999998px;width:1.2px;height:15px;background:#3f76e6;"></div>
<div class="t mono" style="left:0;width:33.3px;text-align:right;top:-6.92px;font-size:13.2px;color:#808080">194</div>
<div class="t mono" style="left:0;width:33.3px;text-align:right;top:10.08px;font-size:13.2px;color:#808080">195</div>
<div class="t code" style="left:42.8px;top:10.08px;letter-spacing:0.0px">    <span class="k">throw</span> <span class="d">err</span>;</div>
<div class="t mono" style="left:0;width:33.3px;text-align:right;top:27.08px;font-size:13.2px;color:#808080">196</div>
<div class="t code" style="left:42.8px;top:27.08px;letter-spacing:0.0px">  }</div>
<div class="t mono" style="left:0;width:33.3px;text-align:right;top:44.08px;font-size:13.2px;color:#808080">197</div>
<div class="t code" style="left:42.8px;top:44.08px;letter-spacing:0.0px">};</div>
<div class="t mono" style="left:0;width:33.3px;text-align:right;top:61.08px;font-size:13.2px;color:#808080">198</div>
<div class="t mono" style="left:0;width:33.3px;text-align:right;top:78.08px;font-size:13.2px;color:#808080">199</div>
<div class="t code" style="left:42.8px;top:78.08px;letter-spacing:0.0px"><span class="k">const</span> <span class="d">_changePassword</span> <span class="o">=</span> <span class="k">async</span> (<span class="d">payload</span>, <span class="d">env</span>) <span class="o">=&gt;</span> {</div>
<div class="t mono" style="left:0;width:33.3px;text-align:right;top:95.08px;font-size:13.2px;color:#808080">200</div>
<div class="t code" style="left:42.8px;top:95.08px;letter-spacing:0.0px">  <span class="k">try</span> {</div>
<div class="t mono" style="left:0;width:33.3px;text-align:right;top:112.08px;font-size:13.2px;color:#808080">201</div>
<div class="t code" style="left:42.8px;top:112.08px;letter-spacing:0.0px">    <span class="k">const</span> <span class="d">url</span> <span class="o">=</span> getUrls(envs, <span class="d">env</span>, <span class="s">'authurl'</span>);</div>
<div class="t mono" style="left:0;width:33.3px;text-align:right;top:129.38px;font-size:13.2px;color:#fff;-webkit-text-stroke:0.35px #fff">202</div>
<div class="t code" style="left:42.8px;top:129.38px;letter-spacing:0.0px">    <span class="k">const</span> <span class="d">res</span> <span class="o">=</span> <span class="k">await</span> axios.post(<span class="s">""</span>.concat(<span class="d">url</span>, <span class="s">"/changePassword"</span>), <span class="d">payload</span>);</div>
<div class="t mono" style="left:0;width:33.3px;text-align:right;top:146.08px;font-size:13.2px;color:#808080">203</div>
<div class="t mono" style="left:0;width:33.3px;text-align:right;top:163.08px;font-size:13.2px;color:#808080">204</div>
<div class="t code" style="left:42.8px;top:163.08px;letter-spacing:0.0px">    <span class="k">if</span> (<span class="o">!</span>_.isEmpty(<span class="d">res</span>.data)) {</div>
<div class="t mono" style="left:0;width:33.3px;text-align:right;top:180.08px;font-size:13.2px;color:#808080">205</div>
<div class="t code" style="left:42.8px;top:180.08px;letter-spacing:0.0px">      <span class="k">if</span> (<span class="d">res</span>.data.authSuccess) {</div>
<div class="t mono" style="left:0;width:33.3px;text-align:right;top:197.08px;font-size:13.2px;color:#808080">206</div>
<div class="t code" style="left:42.8px;top:197.08px;letter-spacing:0.0px">        <span class="k">const</span> <span class="d">auth</span> <span class="o">=</span> transform.fromAuthSrcToBase(<span class="d">res</span>.data); <span class="c">// get the auth</span></div>
<div class="t mono" style="left:0;width:33.3px;text-align:right;top:214.08px;font-size:13.2px;color:#808080">207</div>
<div class="t mono" style="left:0;width:33.3px;text-align:right;top:231.08px;font-size:13.2px;color:#808080">208</div>
<div class="t code" style="left:42.8px;top:231.08px;letter-spacing:0.0px">        <span class="k">let</span> <span class="d">profile</span> <span class="o">=</span> <span class="k">await</span> Get(user.data[<span class="n">0</span>].uid, <span class="d">env</span>, <span class="k">true</span>);</div>
<div class="t mono" style="left:0;width:33.3px;text-align:right;top:248.08px;font-size:13.2px;color:#808080">209</div>
<div class="t mono" style="left:0;width:33.3px;text-align:right;top:265.08px;font-size:13.2px;color:#808080">210</div>
<div class="t code" style="left:42.8px;top:265.08px;letter-spacing:0.0px">        <span class="k">if</span> (<span class="d">profile</span>.hasErrors) {</div>
<div class="t mono" style="left:0;width:33.3px;text-align:right;top:282.08px;font-size:13.2px;color:#808080">211</div>
<div class="t code" style="left:42.8px;top:282.08px;letter-spacing:0.0px">          <span class="k">throw</span> buildSdkErrorResponse(<span class="d">profile</span>.validation[<span class="n">0</span>], <span class="s">'auth'</span>);</div>
<div class="t mono" style="left:0;width:33.3px;text-align:right;top:299.08px;font-size:13.2px;color:#808080">212</div>
<div class="t code" style="left:42.8px;top:299.08px;letter-spacing:0.0px">        }</div>
<div class="t mono" style="left:0;width:33.3px;text-align:right;top:316.08px;font-size:13.2px;color:#808080">213</div>
<div class="t mono" style="left:0;width:33.3px;text-align:right;top:333.08px;font-size:13.2px;color:#808080">214</div>
<div class="t code" style="left:42.8px;top:333.08px;letter-spacing:0.0px">        <span class="d">profile</span> <span class="o">=</span> <span class="d">profile</span>.validation.data;</div>
<div class="t mono" style="left:0;width:33.3px;text-align:right;top:350.08px;font-size:13.2px;color:#808080">215</div>
<div class="t code" style="left:42.8px;top:350.08px;letter-spacing:0.0px">        <span class="d">profile</span>.auth <span class="o">=</span> <span class="d">auth</span>;</div>
<div class="t mono" style="left:0;width:33.3px;text-align:right;top:367.08px;font-size:13.2px;color:#808080">216</div>
<div class="t code" style="left:42.8px;top:367.08px;letter-spacing:0.0px">        <span class="d">res</span>.data <span class="o">=</span> <span class="d">profile</span>;</div>
<div class="t mono" style="left:0;width:33.3px;text-align:right;top:384.08px;font-size:13.2px;color:#808080">217</div>
<div class="t code" style="left:42.8px;top:384.08px;letter-spacing:0.0px">        <span class="d">res</span>.name <span class="o">=</span> model.name();</div>
<div class="t mono" style="left:0;width:33.3px;text-align:right;top:401.08px;font-size:13.2px;color:#808080">218</div>
<div class="t code" style="left:42.8px;top:401.08px;letter-spacing:0.0px">        <span class="k">return</span> <span class="d">res</span>;</div>
<div class="t mono" style="left:0;width:33.3px;text-align:right;top:418.08px;font-size:13.2px;color:#808080">219</div>
<div class="t code" style="left:42.8px;top:418.08px;letter-spacing:0.0px">      }</div>
<div class="t mono" style="left:0;width:33.3px;text-align:right;top:435.08px;font-size:13.2px;color:#808080">220</div>
<div class="t mono" style="left:0;width:33.3px;text-align:right;top:452.08px;font-size:13.2px;color:#808080">221</div>
<div class="t code" style="left:42.8px;top:452.08px;letter-spacing:0.0px">      <span class="k">throw</span> buildSdkErrorResponse(<span class="d">res</span>.data.authMessage, <span class="s">'auth'</span>);</div>
<div class="t mono" style="left:0;width:33.3px;text-align:right;top:469.08px;font-size:13.2px;color:#808080">222</div>
<div class="t code" style="left:42.8px;top:469.08px;letter-spacing:0.0px">    }</div>
<div class="t mono" style="left:0;width:33.3px;text-align:right;top:486.08px;font-size:13.2px;color:#808080">223</div>
<div class="t code" style="left:42.8px;top:486.08px;letter-spacing:0.0px">  } <span class="k">catch</span> (<span class="d">err</span>) {</div>
<div class="t mono" style="left:0;width:33.3px;text-align:right;top:503.08px;font-size:13.2px;color:#808080">224</div>
<div class="t code" style="left:42.8px;top:503.08px;letter-spacing:0.0px">    <span class="k">if</span> (<span class="d">err</span>.name <span class="o">!==</span> <span class="s">'sdkError'</span>) {</div>
<div class="t mono" style="left:0;width:33.3px;text-align:right;top:520.08px;font-size:13.2px;color:#808080">225</div>
<div class="t code" style="left:42.8px;top:520.08px;letter-spacing:0.0px">      <span class="k">throw</span> buildSdkErrorResponse(_.has(<span class="d">err</span>, <span class="s">'response.data'</span>) <span class="o">?</span> <span class="d">err</span>.response.data : <span class="d">err</span>, <span class="s">'sdk'</span>);</div>
<div class="t mono" style="left:0;width:33.3px;text-align:right;top:537.08px;font-size:13.2px;color:#808080">226</div>
<div class="a" style="left:443px;top:74.6px;width:200px;height:17.2px;background:#ffe3c7"></div>
<div class="t code" style="left:449px;top:78.08px;color:#5e5548">payload = {data: {…}}</div>
<div class="a" style="left:419px;top:108.6px;width:200px;height:17.2px;background:#ffe3c7"></div>
<div class="t code" style="left:425px;top:112.08px;color:#5e5548">env = {env: <span class="s">"dev"</span>, s: 1}</div>
</div>
<div class="a" style="left:1637px;top:218px;width:25px;height:525px;background:#f1f1f1;"></div>
<svg style="left:1643px;top:228px" width="11.6" height="6.2" viewBox="0 0 11.6 6.2"><path d="M0,6.2H11.6L5.8,0Z" fill="#505050"/></svg>
<svg style="left:1643px;top:725px" width="11.6" height="6.2" viewBox="0 0 11.6 6.2"><path d="M0,0H11.6L5.8,6.2Z" fill="#505050"/></svg>
<div class="a" style="left:1639px;top:547px;width:21px;height:48px;background:#c1c1c1;"></div>
<div class="a" style="left:1098px;top:743px;width:539px;height:24px;background:#f1f1f1;"></div>
<div class="a" style="left:1637px;top:743px;width:25px;height:24px;background:#fff;"></div>
<svg style="left:1107px;top:749.5px" width="6.5" height="11" viewBox="0 0 6.5 11"><path d="M6.5,0V11L0,5.5Z" fill="#a3a3a3"/></svg>
<svg style="left:1621px;top:749.5px" width="6.5" height="11" viewBox="0 0 6.5 11"><path d="M0,0V11L6.5,5.5Z" fill="#505050"/></svg>
<div class="a" style="left:1123px;top:745px;width:241px;height:20px;background:#c1c1c1;"></div>
<div class="a" style="left:1060px;top:767px;width:602px;height:1px;background:#cbcbcb;"></div>
<div class="a" style="left:1060px;top:768px;width:602px;height:32px;background:#f3f3f3;"></div>
<div class="t  mono" style="left:1068.68px;top:776px;line-height:19px;font-size:16.5px;color:#4a4a4a;letter-spacing:0.5px;-webkit-text-stroke:0.4px #4a4a4a">{}</div>
<div class="t " style="left:1105.34px;top:777px;line-height:16px;font-size:14.2px;letter-spacing:-0.064px;color:#5a5a5a">Line 202, Column 1</div>
<div class="t " style="right:266.00px;top:777px;line-height:16px;font-size:14.2px;color:#5a5a5a">(source mapped from <span style="text-decoration:underline">0.chunk.js</span>)</div>
<svg style="left:1675px;top:194px" width="22" height="20" viewBox="0 0 22 20"><rect x="0" y="1" width="3.6" height="12" fill="#1a73e8"/><path d="M6,1L16,7L6,13Z" fill="#1a73e8"/><path d="M20,14V20H14Z" fill="#6e6e6e"/></svg>
<svg style="left:1705px;top:194px" width="24" height="14" viewBox="0 0 24 14"><path d="M2.2,11A9,9 0 0 1 19.2,8.8" stroke="#6e6e6e" stroke-width="2.8" fill="none"/><path d="M22.6,4.8L20.6,12.2L14.6,8.2Z" fill="#6e6e6e"/><circle cx="11.2" cy="10.8" r="2.1" fill="#6e6e6e"/></svg>
<svg style="left:1744px;top:193px" width="12" height="17" viewBox="0 0 12 17"><path d="M6,0.8V8" stroke="#6e6e6e" stroke-width="3.3"/><path d="M0.8,4.800L6,10L11.200,4.800Z" fill="#6e6e6e" stroke="#6e6e6e" stroke-width="0.6"/><circle cx="6" cy="14.2" r="2.4" fill="#6e6e6e"/></svg>
<svg style="left:1777px;top:193px" width="12" height="17" viewBox="0 0 12 17"><path d="M6,10.2V2.5" stroke="#6e6e6e" stroke-width="3.3"/><path d="M0.8,6.2L6,1L11.200,6.2Z" fill="#6e6e6e" stroke="#6e6e6e" stroke-width="0.6"/><circle cx="6" cy="14.2" r="2.4" fill="#6e6e6e"/></svg>
<svg style="left:1807px;top:194px" width="19" height="12" viewBox="0 0 19 12"><path d="M1,6H8" stroke="#6e6e6e" stroke-width="3.2"/><path d="M5.8,1.2L10.6,6L5.8,10.8Z" fill="#6e6e6e" stroke="#6e6e6e" stroke-width="0.6"/><circle cx="14.8" cy="6" r="2.4" fill="#6e6e6e"/></svg>
<div class="a" style="left:1838px;top:191px;width:1.8px;height:20px;background:#cacaca;"></div>
<svg style="left:1849px;top:191px" width="24" height="20" viewBox="0 0 24 20"><path d="M1.5,4.5H16.5L22.5,10.3L16.5,16H1.5Z" fill="#6e6e6e"/><path d="M3,19.5L17,0.5" stroke="#f3f3f3" stroke-width="4.4"/><path d="M3.5,19L16.5,1" stroke="#6e6e6e" stroke-width="1.7"/></svg>
<svg style="left:1886px;top:193px" width="18" height="17" viewBox="0 0 18 17"><path d="M5.3,0H12.7L18,5V12L12.7,17H5.3L0,12V5Z" fill="#6e6e6e"/><rect x="5.4" y="4.6" width="2.6" height="7.8" fill="#f3f3f3"/><rect x="10" y="4.6" width="2.6" height="7.8" fill="#f3f3f3"/></svg>
<div class="a" style="left:1663px;top:218px;width:232px;height:583px;background:#fff;"></div>
<div class="a" style="left:1663px;top:218px;width:232px;height:35px;background:#fffbe6;"></div>
<div class="a" style="left:1663px;top:253px;width:232px;height:1px;background:#ddd;"></div>
<svg style="left:1670px;top:229px" width="12" height="12" viewBox="0 0 12 12"><circle cx="6" cy="6" r="6" fill="#665b00"/><rect x="5" y="4.8" width="2" height="4.8" fill="#fffbe6"/><rect x="4.2" y="4.8" width="2" height="1" fill="#fffbe6"/><rect x="4.2" y="8.8" width="3.6" height="1" fill="#fffbe6"/><circle cx="6" cy="2.9" r="1.15" fill="#fffbe6"/></svg>
<div class="t " style="left:1687.88px;top:228px;line-height:16px;font-size:14.0px;letter-spacing:0.097px;font-weight:bold;color:#5c5300">Paused on breakpoint</div>
<div class="a" style="left:1663px;top:254px;width:232px;height:26px;background:#f3f3f3;"></div>
<div class="a" style="left:1663px;top:280px;width:232px;height:1px;background:#ccc;"></div>
<svg style="left:1671px;top:262.5px" width="7" height="10" viewBox="0 0 7 10"><path d="M0,0.5V9.5L6.5,5Z" fill="#6e6e6e"/></svg>
<div class="t " style="left:1683.54px;top:260px;line-height:16px;font-size:14.2px;letter-spacing:0.162px;color:#333">Watch</div>
<div class="a" style="left:1663px;top:281px;width:232px;height:24px;background:#f3f3f3;"></div>
<div class="a" style="left:1663px;top:305px;width:232px;height:1px;background:#ccc;"></div>
<svg style="left:1670px;top:290px" width="10" height="7" viewBox="0 0 10 7"><path d="M0.5,0H9.5L5,7Z" fill="#6e6e6e"/></svg>
<div class="t " style="left:1682.89px;top:286px;line-height:16px;font-size:14.2px;letter-spacing:-0.359px;color:#333">Call Stack</div>
<svg style="left:1669px;top:312px" width="11" height="13" viewBox="0 0 11 13"><path d="M0,3H5V0L11,6.5L5,13V10H0Z" fill="#3b82f6"/></svg>
<div class="t " style="left:1687.43px;top:313px;line-height:16px;font-size:14.2px;letter-spacing:-0.353px;color:#222">_changePassword</div>
<div class="t " style="right:46.90px;top:331px;line-height:16px;font-size:14.2px;letter-spacing:-0.213px;color:#959595">index.js:202</div>
<div class="a" style="left:1663px;top:351px;width:232px;height:1px;background:#ececec;"></div>
<div class="t " style="left:1686.49px;top:357px;line-height:16px;font-size:14.2px;letter-spacing:-0.259px;color:#222">ChangePassword</div>
<div class="t " style="right:46.90px;top:375px;line-height:16px;font-size:14.2px;letter-spacing:-0.213px;color:#959595">index.js:237</div>
<div class="a" style="left:1663px;top:408px;width:19px;height:1px;background:#dcdcdc;"></div>
<div class="a" style="left:1885px;top:408px;width:10px;height:1px;background:#dcdcdc;"></div>
<div class="t " style="left:1686.80px;top:401px;line-height:15px;font-size:13.8px;letter-spacing:0.122px;font-weight:bold;color:#9a9a9a">await in ChangePassword ...</div>
<div class="t " style="left:1686.60px;top:426px;line-height:16px;font-size:14.2px;letter-spacing:-0.194px;color:#222">changePassword</div>
<div class="t " style="right:47.13px;top:426px;line-height:16px;font-size:14.2px;letter-spacing:-0.408px;color:#959595">users.js:19</div>
<div class="a" style="left:1663px;top:446px;width:232px;height:1px;background:#ececec;"></div>
<div class="t " style="left:1686.22px;top:452px;line-height:16px;font-size:14.2px;letter-spacing:-0.005px;color:#222">handleClick</div>
<div class="t " style="right:46.66px;top:470px;line-height:16px;font-size:14.2px;letter-spacing:0.020px;color:#959595">password-container.js:87</div>
<div class="a" style="left:1663px;top:489px;width:232px;height:1px;background:#ececec;"></div>
<div class="t " style="left:1686.60px;top:496px;line-height:16px;font-size:14.2px;letter-spacing:-0.163px;color:#222">callCallback</div>
<div class="t " style="right:28.13px;top:514px;line-height:16px;font-size:14.2px;letter-spacing:0.064px;color:#959595">react-dom.development.js:363</div>
<div class="a" style="left:1663px;top:534px;width:232px;height:1px;background:#ececec;"></div>
<div class="t " style="left:1686.26px;top:541px;line-height:16px;font-size:14.2px;letter-spacing:-0.050px;color:#222">invokeGuardedCallbackDev</div>
<div class="t " style="right:28.03px;top:559px;line-height:16px;font-size:14.2px;letter-spacing:0.068px;color:#959595">react-dom.development.js:412</div>
<div class="a" style="left:1663px;top:578px;width:232px;height:1px;background:#ececec;"></div>
<div class="t " style="left:1686.26px;top:585px;line-height:16px;font-size:14.2px;letter-spacing:-0.058px;color:#222">invokeGuardedCallback</div>
<div class="t " style="right:28.16px;top:603px;line-height:16px;font-size:14.2px;letter-spacing:0.063px;color:#959595">react-dom.development.js:465</div>
<div class="a" style="left:1663px;top:623px;width:232px;height:1px;background:#ececec;"></div>
<div class="t " style="left:1686.26px;top:630px;line-height:16px;font-size:14.2px;letter-spacing:-0.081px;color:#222">invokeGuardedCallbackAndC...</div>
<div class="t " style="right:28.20px;top:648px;line-height:16px;font-size:14.2px;letter-spacing:0.061px;color:#959595">react-dom.development.js:480</div>
<div class="a" style="left:1663px;top:667px;width:232px;height:1px;background:#ececec;"></div>
<div class="t " style="left:1686.60px;top:674px;line-height:16px;font-size:14.2px;letter-spacing:-0.013px;color:#222">executeDispatch</div>
<div class="t " style="right:28.13px;top:692px;line-height:16px;font-size:14.2px;letter-spacing:0.064px;color:#959595">react-dom.development.js:613</div>
<div class="a" style="left:1663px;top:711px;width:232px;height:1px;background:#ececec;"></div>
<div class="t " style="left:1686.60px;top:718px;line-height:16px;font-size:14.2px;letter-spacing:-0.043px;color:#222">executeDispatchesInOrder</div>
<div class="t " style="right:28.13px;top:736px;line-height:16px;font-size:14.2px;letter-spacing:0.064px;color:#959595">react-dom.development.js:638</div>
<div class="a" style="left:1663px;top:756px;width:232px;height:1px;background:#ececec;"></div>
<div class="t " style="left:1686.60px;top:763px;line-height:16px;font-size:14.2px;letter-spacing:-0.212px;color:#222">executeDispatchesAndRelease</div>
<div class="t " style="right:28.13px;top:781px;line-height:16px;font-size:14.2px;letter-spacing:0.064px;color:#959595">react-dom.development.js:743</div>
<div class="a" style="left:1895px;top:218px;width:21px;height:583px;background:#f1f1f1;"></div>
<svg style="left:1901px;top:228px" width="11.6" height="6.2" viewBox="0 0 11.6 6.2"><path d="M0,6.2H11.6L5.8,0Z" fill="#a3a3a3"/></svg>
<svg style="left:1901px;top:784px" width="11.6" height="6.2" viewBox="0 0 11.6 6.2"><path d="M0,0H11.6L5.8,6.2Z" fill="#505050"/></svg>
<div class="a" style="left:1897px;top:242px;width:19px;height:166px;background:#c1c1c1;"></div>
<div class="a" style="left:722px;top:800px;width:1194px;height:1px;background:#cbcbcb;"></div>
<div class="a" style="left:722px;top:801px;width:1194px;height:31px;background:#f3f3f3;"></div>
<div class="a" style="left:722px;top:832px;width:1194px;height:1px;background:#cbcbcb;"></div>
<div class="a" style="left:740px;top:809.18px;width:4px;height:4px;border-radius:50%;background:#6e6e6e"></div>
<div class="a" style="left:740px;top:815.0px;width:4px;height:4px;border-radius:50%;background:#6e6e6e"></div>
<div class="a" style="left:740px;top:820.82px;width:4px;height:4px;border-radius:50%;background:#6e6e6e"></div>
<div class="t " style="left:767.09px;top:810px;line-height:16px;font-size:14.2px;letter-spacing:-0.061px;color:#333">Console</div>
<div class="a" style="left:756px;top:830.5px;width:74.5px;height:2.5px;background:#1a6fe6;"></div>
<svg style="left:1901px;top:817px" width="1" height="1"><path d="M-5,-5L5,5M5,-5L-5,5" stroke="#5a5a5a" stroke-width="1.9" fill="none"/></svg>
<div class="a" style="left:722px;top:833px;width:1194px;height:32px;background:#f3f3f3;"></div>
<div class="a" style="left:722px;top:865px;width:1194px;height:1px;background:#cbcbcb;"></div>
<svg style="left:732px;top:841.5px" width="18" height="15" viewBox="0 0 18 15"><rect x="0.7" y="0.7" width="16.6" height="13.6" stroke="#6e6e6e" stroke-width="1.4" fill="none"/><path d="M4.6,0.7V14.3" stroke="#6e6e6e" stroke-width="1.4"/><path d="M7.6,3.8V11.2L12.8,7.5Z" fill="#6e6e6e"/></svg>
<svg style="left:767.5px;top:841.4px" width="16" height="16" viewBox="0 0 16 16"><circle cx="8" cy="8" r="6.6" stroke="#6e6e6e" stroke-width="2.4" fill="none"/><path d="M3.2,3.2L12.8,12.8" stroke="#6e6e6e" stroke-width="2.4"/></svg>
<div class="a" style="left:797px;top:839px;width:1px;height:20px;background:#ccc;"></div>
<div class="t " style="left:808.59px;top:842px;line-height:16px;font-size:14.2px;letter-spacing:1.129px;color:#444">top</div>
<svg style="left:954px;top:846px" width="9" height="8" viewBox="0 0 9 8"><path d="M0,0H9L4.5,8Z" fill="#6e6e6e"/></svg>
<div class="a" style="left:975px;top:839px;width:1px;height:20px;background:#ccc;"></div>
<svg style="left:986px;top:843px" width="20" height="13" viewBox="0 0 20 13"><path d="M0,6.5C3,1.5 6.5,0 10,0S17,1.5 20,6.5C17,11.5 13.5,13 10,13S3,11.5 0,6.5Z" fill="#6e6e6e"/><circle cx="10" cy="6.5" r="4.2" fill="#f3f3f3"/><circle cx="10" cy="6.5" r="2.5" fill="#6e6e6e"/></svg>
<div class="a" style="left:1018.5px;top:839px;width:1px;height:20px;background:#ccc;"></div>
<div class="a" style="left:1027px;top:838px;width:246px;height:22px;background:#fff;"></div>
<div class="t " style="left:1031.34px;top:843px;line-height:16px;font-size:14.2px;letter-spacing:0.028px;color:#8a8a8a">Filter</div>
<div class="t " style="left:1282.84px;top:842px;line-height:16px;font-size:14.2px;letter-spacing:0.064px;color:#444">Default levels</div>
<svg style="left:1374px;top:845px" width="9" height="8" viewBox="0 0 9 8"><path d="M0,0H9L4.5,8Z" fill="#6e6e6e"/></svg>
<div class="a" style="left:1810px;top:839px;width:1px;height:20px;background:#ccc;"></div>
<div class="t " style="left:1821.49px;top:842px;line-height:16px;font-size:14.2px;letter-spacing:0.305px;color:#9a9a9a">2 hidden</div>
<svg style="left:1892px;top:841px" width="18" height="18" viewBox="-9 -9 18 18"><g fill="#6e6e6e"><rect x="-2" y="-9" width="4" height="5" transform="rotate(0)"/><rect x="-2" y="-9" width="4" height="5" transform="rotate(45)"/><rect x="-2" y="-9" width="4" height="5" transform="rotate(90)"/><rect x="-2" y="-9" width="4" height="5" transform="rotate(135)"/><rect x="-2" y="-9" width="4" height="5" transform="rotate(180)"/><rect x="-2" y="-9" width="4" height="5" transform="rotate(225)"/><rect x="-2" y="-9" width="4" height="5" transform="rotate(270)"/><rect x="-2" y="-9" width="4" height="5" transform="rotate(315)"/><circle r="6.6"/></g><circle r="2.8" fill="#f3f3f3"/></svg>
<div class="a" style="left:722px;top:866px;width:1194px;height:23px;background:#fff;"></div>
<div class="a" style="left:722px;top:889px;width:1194px;height:1px;background:#f0f0f0;"></div>
<div class="t  mono" style="left:750.81px;top:873px;line-height:15px;font-size:13.2px;color:#303030">here</div>
<div class="t  mono" style="right:33.65px;top:873px;line-height:15px;font-size:13.2px;color:#545454;text-decoration:underline">users.js:16</div>
<svg style="left:734px;top:897px" width="7" height="10" viewBox="0 0 7 10"><path d="M1,1L5.5,5L1,9" stroke="#3b78e7" stroke-width="1.8" fill="none"/></svg>
<div class="a" style="left:907.5px;top:532px;width:189.5px;height:28px;background:#f7f7f7;border:1px solid #d0d0d0;box-shadow:0 1px 3px rgba(0,0,0,.25)"></div>
<div class="t " style="left:917.70px;top:539px;line-height:16px;font-size:14.2px;letter-spacing:-0.054px;color:#333">desks.js (from source map)</div>
<div class="a" style="left:0px;top:1020px;width:1920px;height:60px;background:#070c14;"></div>
<div class="a" style="left:821px;top:1020px;width:73px;height:56px;background:#3a3d43;"></div>
<svg style="left:24px;top:1038px" width="24" height="24" viewBox="0 0 24 24"><path d="M0,3.4L10,2V11.4H0ZM11.4,1.8L24,0V11.4H11.4ZM0,12.7H10V22L0,20.6ZM11.4,12.7H24V24L11.4,22.2Z" fill="#fff"/></svg>
<svg style="left:95px;top:1036px" width="28" height="28" viewBox="0 0 28 28"><circle cx="16.3" cy="10.5" r="8.2" stroke="#fff" stroke-width="1.6" fill="none"/><path d="M10.4,16.6L1.5,26" stroke="#fff" stroke-width="1.8"/></svg>
<svg style="left:167px;top:1037px" width="26" height="25" viewBox="0 0 26 25"><path d="M1,3.500V1H17V3.500M1,21.500V24H17V21.500" stroke="#fff" stroke-width="1.200" fill="none"/><rect x="1.200" y="6.500" width="15.600" height="12" stroke="#fff" stroke-width="1.300" fill="none"/><path d="M23.500,0.500V24" stroke="#fff" stroke-width="1.200"/><rect x="22" y="8" width="3" height="3" fill="#fff"/></svg>
<svg style="left:241px;top:1037px" width="32" height="27" viewBox="0 0 32 27"><path d="M0,1.5A1.5,1.5 0 0 1 1.5,0H11L13.5,2.5H30.5A1.5,1.5 0 0 1 32,4V25.5H0Z" fill="#f5c84c"/><rect x="2" y="1.3" width="8" height="1.5" fill="#fff"/><rect x="0" y="4.5" width="32" height="21.5" rx="1" fill="#fbe08e"/><path d="M5.5,26V14.5H26.5V26H21V19.5H11V26Z" fill="#3aa5e8"/><rect x="5.5" y="13.5" width="21" height="2.5" fill="#2b8ad6"/></svg>
<svg style="left:315px;top:1036px" width="33" height="27" viewBox="0 0 33 27"><rect x="0.6" y="0.6" width="31.8" height="25.8" fill="#000" stroke="#a9a9a9" stroke-width="1.2"/><rect x="1.2" y="1.2" width="30.6" height="2.6" fill="#7a7a7a"/><defs><linearGradient id="cg" x1="0" x2="1"><stop offset="0.3" stop-color="#000"/><stop offset="1" stop-color="#5a5a5a"/></linearGradient></defs><rect x="1.2" y="3.8" width="30.6" height="8" fill="url(#cg)"/><text x="3" y="10.5" font-family="Liberation Mono" font-size="6.5" font-weight="bold" fill="#e8e8e8">C:\_</text></svg>
<svg style="left:390px;top:1033px" width="34" height="34" viewBox="0 0 34 34"><defs><linearGradient id="ghg" x1="0" y1="0" x2="0" y2="1"><stop offset="0" stop-color="#a044b4"/><stop offset="1" stop-color="#5b2c8a"/></linearGradient><clipPath id="ghc"><circle cx="17" cy="17" r="15.600"/></clipPath></defs><circle cx="17" cy="17" r="17" fill="#d9cfe6"/><circle cx="17" cy="17" r="15.600" fill="url(#ghg)"/><g clip-path="url(#ghc)"><path d="M8.800,8.500L12.800,11.600Q17,10.500 21.200,11.600L25.200,8.500V14.800Q27.200,18 25,21.800Q23,24.800 19.800,25V34H14.200V29.500Q9.500,31 8,26.500Q10.800,28.800 14.200,27.200V25Q11,24.800 9,21.800Q6.800,18 8.800,14.800Z" fill="#f1edf5"/></g></svg>
<svg style="left:464px;top:1032px" width="36" height="36" viewBox="0 0 36 36"><defs><radialGradient id="gl" cx="0.4" cy="0.35"><stop offset="0" stop-color="#e9f3ff"/><stop offset="0.5" stop-color="#6aa7ea"/><stop offset="1" stop-color="#1f5fc4"/></radialGradient></defs><circle cx="20.5" cy="14.5" r="14" fill="url(#gl)"/><radialGradient id="stg" cx="0.45" cy="0.4"><stop offset="0" stop-color="#ff9a86"/><stop offset="0.7" stop-color="#f0402a"/><stop offset="1" stop-color="#e2301c"/></radialGradient><path d="M14.5,7.5L17.7,16.3L27,16.6L19.6,22.3L22.2,31.2L14.5,26L6.8,31.2L9.4,22.3L2,16.6L11.3,16.3Z" transform="translate(0.300,1.400)" fill="url(#stg)" stroke="#ffc21a" stroke-width="1.700" stroke-linejoin="miter"/></svg>
<svg style="left:539px;top:1034px" width="36" height="33" viewBox="0 0 36 33"><rect x="9" y="0" width="26" height="30" rx="2" fill="#1066b5"/><rect x="15" y="2" width="9" height="9" fill="#1b8be0"/><rect x="24" y="2" width="10" height="9" fill="#3ec5f5"/><rect x="15" y="11" width="9" height="9" fill="#0f5aa8"/><rect x="24" y="11" width="10" height="9" fill="#1b8be0"/><path d="M9,21L22,30L35,21V31A2,2 0 0 1 33,33H11A2,2 0 0 1 9,31Z" fill="#1d7fd6"/><path d="M22,30L35,21V31A2,2 0 0 1 33,33H18Z" fill="#35a6ee"/><rect x="0" y="7" width="18" height="18" rx="1.500" fill="#1469c7"/><circle cx="9" cy="16" r="4.100" fill="none" stroke="#fff" stroke-width="2.700"/></svg>
<svg style="left:614px;top:1033px" width="38" height="38" viewBox="0 0 38 38"><circle cx="30" cy="8" r="3.6" fill="#5059c9"/><circle cx="19.5" cy="6" r="5.2" fill="#7b83eb"/><path d="M25,13H35A1.500,1.500 0 0 1 36.500,14.500V23A6,6 0 0 1 25,25Z" fill="#5059c9"/><path d="M10,13H27V26A8.500,8.500 0 0 1 10,26Z" fill="#7b83eb"/><rect x="0" y="8" width="18" height="18" rx="1.5" fill="#4b53bc"/><path d="M4.500,12.500H13.500V14.800H10.200V22.500H7.800V14.800H4.500Z" fill="#fff"/><circle cx="29.5" cy="29.500" r="7.300" fill="#fff"/><circle cx="29.5" cy="29.500" r="6" fill="#c4314b"/><rect x="25.500" y="28.400" width="8" height="2.200" fill="#fff"/></svg>
<svg style="left:689px;top:1032px" width="40" height="40" viewBox="0 0 40 40"><path d="M9,2A8,8 0 0 1 14,3.500A14,14 0 0 1 31,20A8,8 0 0 1 20,31A14,14 0 0 1 3.500,14A8,8 0 0 1 9,2Z" fill="#fff" stroke="#10a5e6" stroke-width="2.4"/><path d="M22.800,11.500Q20.500,8.800 16.500,9.200Q12,9.800 12,13.300Q12,16.200 17,17.200Q21.500,18 21.500,20.200Q21.500,22.800 17.500,22.900Q14,23 12.300,20" stroke="#10a5e6" stroke-width="3.300" fill="none" stroke-linecap="round"/><circle cx="30.500" cy="30.500" r="7.600" fill="#fff"/><circle cx="30.500" cy="30.500" r="6.300" fill="#6bb31a"/><path d="M27.300,30.600L29.700,33L34,28.300" stroke="#fff" stroke-width="1.800" fill="none"/></svg>
<svg style="left:765px;top:1033px" width="34" height="34" viewBox="0 0 35 35"><circle cx="17.500" cy="17.500" r="17.500" fill="#f2f2f2"/><g stroke-linecap="round" stroke-width="3.600" fill="none"><path d="M14.700,8V15" stroke="#36c5f0"/><path d="M7.500,14.800H11.500" stroke="#36c5f0"/><path d="M20,14.800H27" stroke="#2eb67d"/><path d="M20.300,7.800V11.500" stroke="#2eb67d"/><path d="M20.300,20V27" stroke="#ecb22e"/><path d="M23.500,20.300H27.500" stroke="#ecb22e"/><path d="M8,20.300H15" stroke="#e01e5a"/><path d="M14.700,23.500V27.500" stroke="#e01e5a"/></g></svg>
<svg style="left:840px;top:1032px" width="34" height="34" viewBox="-17 -17 34 34"><circle r="17" fill="#db4437"/><path d="M0,0L-14.720,-8.500A17,17 0 0 0 -0.500,17L7.500,3.500Z" fill="#0f9d58"/><path d="M0,0L7.360,4.250L-0.640,17A17,17 0 0 0 14.720,-8.500H0Z" fill="#ffcd40"/><path d="M-14.720,-8.500A17,17 0 0 1 14.720,-8.500H0L-7.360,4.250Z" fill="#db4437"/><circle r="7.800" fill="#f1f1f1"/><circle r="6.200" fill="#4285f4"/></svg>
<svg style="left:917px;top:1034px" width="31" height="32" viewBox="0 0 31 32"><path d="M0.500,14.500C2,5 9,0 16.500,0C26,0 31,7 31,15.500V19H11C11.500,24 15.500,26.500 20.500,26.500C24,26.500 27,25.500 29.500,24V30C26.500,31.500 23,32 19.500,32C10,32 3.500,26 3.500,17.500C3.500,13 6,9.500 9.500,7.500C5.500,8.500 2,11 0.500,14.500ZM11,13H22C22,9 19.500,6.500 16.500,6.500C13.500,6.500 11.300,9 11,13Z" fill="#0f7bdb"/></svg>
<svg style="left:990px;top:1032px" width="36" height="36" viewBox="0 0 36 36"><defs><radialGradient id="ieg" cx="0.45" cy="0.4" r="0.7"><stop offset="0" stop-color="#9be6ff"/><stop offset="0.6" stop-color="#43bdf3"/><stop offset="1" stop-color="#1b8fd8"/></radialGradient></defs><ellipse cx="17" cy="18" rx="20" ry="8.500" transform="rotate(-42 17 18)" stroke="#e9b616" stroke-width="2.400" fill="none"/><path d="M3.500,18.500C4,10 10.500,4.500 18.500,4.500C27,4.500 33,10.500 33,19V21.500H12.500C13,25.500 16,27.500 19.500,27.500C22.500,27.500 24.500,26.300 25.800,24H32.300C30.300,30 25.300,33.500 19,33.500C10,33.500 3.500,27.500 3.500,18.500ZM12.500,16H24.500C24,12.500 21.500,10.500 18.500,10.500C15.500,10.500 13,12.500 12.500,16Z" fill="url(#ieg)"/><path d="M3.200,32.800C-1.500,27 6,13 19,5.500C25.500,1.800 32,1.200 33.200,5.500" stroke="#f6c722" stroke-width="2.600" fill="none"/></svg>
<svg style="left:1064px;top:1032px" width="36" height="36" viewBox="0 0 36 36"><ellipse cx="13.500" cy="20.500" rx="12.500" ry="5.200" transform="rotate(-16 13.500 20.500)" fill="#8f9296" stroke="#b8474a" stroke-width="0.800"/><ellipse cx="16.600" cy="11.600" rx="15" ry="8.800" transform="rotate(-18 16.600 11.600)" fill="#f2f2f2" stroke="#d8363a" stroke-width="1.600"/><path d="M16,4.500L22.200,23.200M7.200,13.200L23.500,22" stroke="#8b9096" stroke-width="1.500"/><path d="M9,10L24,7M10,13.500L20,11.500" stroke="#d0d0d0" stroke-width="0.800"/><ellipse cx="22.200" cy="28.800" rx="2.700" ry="5.500" transform="rotate(15 22.200 28.800)" fill="none" stroke="#2f8fdc" stroke-width="2.200"/><ellipse cx="29" cy="23.400" rx="2.700" ry="5.500" transform="rotate(62 29 23.400)" fill="none" stroke="#2f8fdc" stroke-width="2.200"/></svg>
<svg style="left:1139px;top:1034px" width="36" height="31.500" viewBox="0 0 36 34" preserveAspectRatio="none"><path d="M6,6A17,16 0 1 1 5,26" stroke="#fff" stroke-width="2.600" fill="none"/><path d="M5,26A17,16 0 0 1 4,11" stroke="#fff" stroke-width="2.600" fill="none"/><path d="M3,27L13,14L18.500,21L24.500,14.500L33.500,26.500A17,16 0 0 1 3,27Z" fill="#fff"/><circle cx="13" cy="11" r="1.500" fill="#fff"/><path d="M3,4Q7,0.500 12,1" stroke="#fff" stroke-width="2.200" fill="none"/></svg>
<svg style="left:1214px;top:1034px" width="36" height="34" viewBox="0 0 36 34"><rect x="0.500" y="7" width="9" height="18" fill="#b9bec4"/><rect x="1.800" y="9" width="2" height="2" fill="#3db23d"/><path d="M8,2L34,4V23L8,25Z" fill="#c9ced4"/><path d="M10.500,4.500L31.500,6.500V20.500L10.500,22.500Z" fill="#d8ecfa"/><path d="M11,14L14,14.500L15.500,10L17,17.500L19,12.500L20.500,16L22,8L24,18L26,12L27.500,15.500L31,14.500" stroke="#3c8fd0" stroke-width="1.200" fill="none"/><path d="M16,25H25V29H16Z" fill="#b0b5bb"/><ellipse cx="20.500" cy="30.500" rx="8" ry="2.600" fill="#c9ced4"/></svg>
<svg style="left:1289px;top:1032px" width="37" height="37" viewBox="0 0 37 37"><path d="M26.560,0L26.560,10L4.830,26.450L1.170,21.950Z" fill="#0a78c4"/><circle cx="3" cy="24.200" r="2.900" fill="#0a78c4"/><path d="M26.560,26L26.560,36L1.170,14.050L4.830,9.550Z" fill="#0b8fe0"/><circle cx="3" cy="11.800" r="2.900" fill="#0b8fe0"/><path d="M26.560,0L35.900,4.200V31.800L26.560,36Z" fill="#25a9f5"/></svg>
<svg style="left:1448px;top:1037px" width="24" height="26" viewBox="0 0 24 26"><circle cx="15" cy="5.500" r="3.800" stroke="#fff" stroke-width="1.700" fill="none"/><path d="M9.500,14A6,6 0 0 1 21.500,13.500" stroke="#fff" stroke-width="1.700" fill="none"/><circle cx="7.500" cy="14.500" r="3.600" stroke="#fff" stroke-width="1.700" fill="none"/><path d="M1,25A6.500,6.500 0 0 1 14,25" stroke="#fff" stroke-width="1.700" fill="none"/></svg>
<svg style="left:1511px;top:1045px" width="18" height="10" viewBox="0 0 18 10"><path d="M0.500,9.500L9,1L17.500,9.500" stroke="#fff" stroke-width="1.500" fill="none"/></svg>
<svg style="left:1555px;top:1042px" width="26" height="17" viewBox="0 0 26 17"><path d="M7,8A6.500,6.500 0 0 1 19.300,5.500A5.300,5.300 0 0 1 25,11L10,13Z" fill="#0f6cbf"/><path d="M5,16.500A4.700,4.700 0 0 1 4.500,7.200A6,6 0 0 1 14,6L24,12.500A4.200,4.200 0 0 1 21,16.500Z" fill="#1b8de0"/><path d="M14,6L25,11.500A4.300,4.300 0 0 1 21,16.500H6Z" fill="#2fa2ee"/></svg>
<svg style="left:1603px;top:1040px" width="27" height="18" viewBox="0 0 27 18"><rect x="5.500" y="4.700" width="19" height="11.500" stroke="#fff" stroke-width="1.500" fill="none"/><rect x="25.200" y="8" width="1.500" height="5" fill="#fff"/><rect x="7.500" y="6.700" width="15" height="7.500" fill="#fff"/><path d="M2,0.500V3.500M5.500,0.500V3.500" stroke="#fff" stroke-width="1.300"/><path d="M0.700,3.500H6.800V6.500A3,3 0 0 1 0.700,6.500Z" fill="#070c14" stroke="#fff" stroke-width="1.300"/><path d="M3.700,9.500V14" stroke="#fff" stroke-width="1.300"/></svg>
<svg style="left:1655px;top:1041px" width="22" height="20" viewBox="0 0 22 20"><circle cx="17.500" cy="17.500" r="1.600" fill="#fff"/><path d="M11.500,17.500A6,6 0 0 1 17.500,11.500" stroke="#fff" stroke-width="1.500" fill="none"/><path d="M7,17.500A10.500,10.500 0 0 1 17.500,7" stroke="#fff" stroke-width="1.500" fill="none"/><path d="M2.500,17.500A15,15 0 0 1 17.500,2.500" stroke="#aaa" stroke-width="1.300" fill="none"/></svg>
<svg style="left:1700px;top:1040px" width="25" height="20" viewBox="0 0 25 20"><path d="M1,6.500H5L10,1.500V18.500L5,13.500H1Z" stroke="#fff" stroke-width="1.400" fill="none" stroke-linejoin="round"/><path d="M13.500,7A4,4 0 0 1 13.500,13" stroke="#fff" stroke-width="1.300" fill="none"/><path d="M16.500,4.500A7.500,7.500 0 0 1 16.500,15.500" stroke="#ccc" stroke-width="1.200" fill="none"/><path d="M19.800,1.800A11.500,11.500 0 0 1 19.800,18.200" stroke="#777" stroke-width="1.100" fill="none"/></svg>
<div class="t " style="left:1754.71px;top:1026px;line-height:20px;font-size:17.2px;letter-spacing:0.391px;color:#fff">5:53 PM</div>
<div class="t " style="left:1746.29px;top:1055px;line-height:20px;font-size:17.2px;letter-spacing:0.924px;color:#fff">10/9/2019</div>
<svg style="left:1858px;top:1038px" width="36" height="36" viewBox="0 0 36 36"><path d="M0,0H24.500V19.500H10.500V26L5,19.500H0Z" fill="#fff"/><path d="M5.500,5H19.500M5.500,9.300H19.500M5.500,13.600H14.500" stroke="#070c14" stroke-width="1.100"/><circle cx="23.800" cy="23.600" r="11.500" fill="#2a2b2d" stroke="#777" stroke-width="1.100"/><path d="M12.300,23.600A11.500,11.500 0 0 1 24.400,12.200V19.500H12.900Z" fill="#8a8a8a" opacity="0.850"/><path d="M24.400,12.200V19.500H10.500" stroke="none" fill="none"/></svg>
<div class="t " style="left:1877.05px;top:1051px;line-height:21px;font-size:18.5px;font-weight:bold;color:#fff">1</div>
<div class="a" style="left:1912px;top:1020px;width:2px;height:56px;background:#7b7b7b;"></div>
<div id="frame"></div>
</body></html>
